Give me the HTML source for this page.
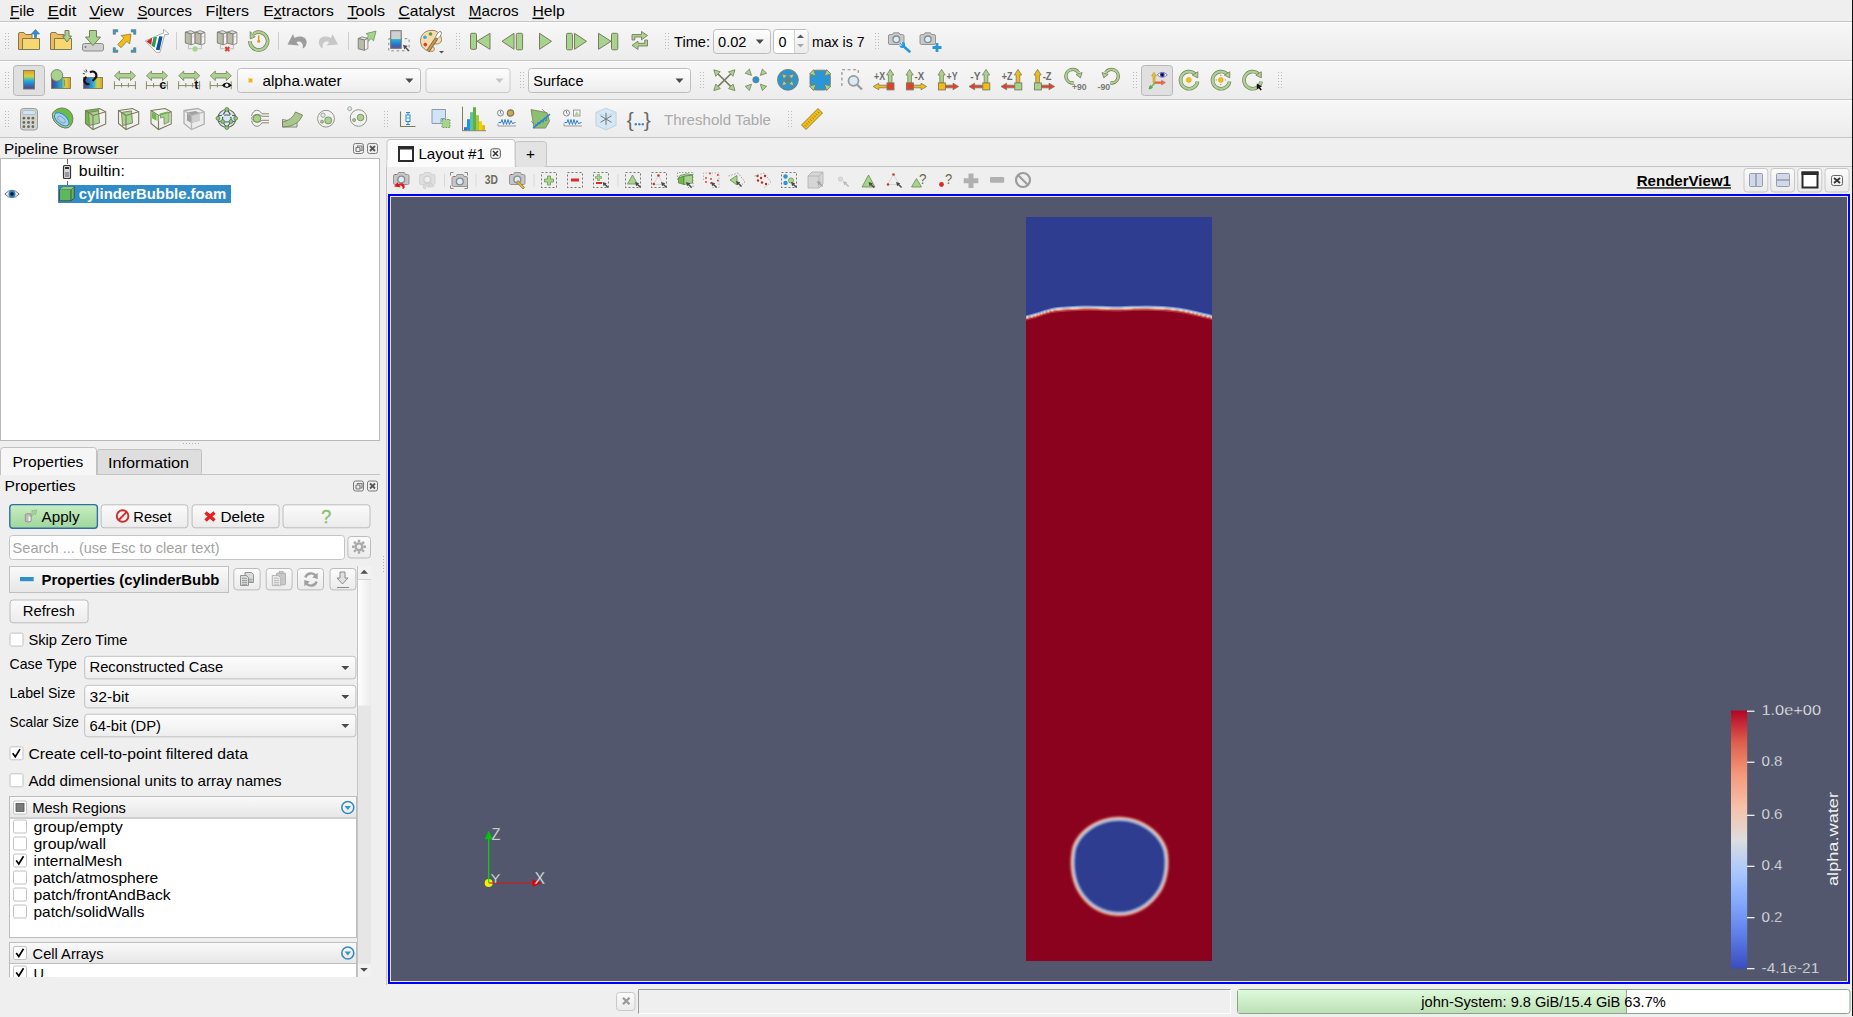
<!DOCTYPE html><html><head><meta charset="utf-8"><style>html,body{margin:0;padding:0;width:1853px;height:1017px;overflow:hidden;background:#efefef}svg{display:block;font-family:"Liberation Sans",sans-serif}</style></head><body><svg width="1853" height="1017" viewBox="0 0 1853 1017"><defs><linearGradient id="gTB" x1="0" y1="0" x2="0" y2="1"><stop offset="0" stop-color="#f7f7f7"/><stop offset="1" stop-color="#ececec"/></linearGradient><linearGradient id="gCombo" x1="0" y1="0" x2="0" y2="1"><stop offset="0" stop-color="#fdfdfd"/><stop offset="1" stop-color="#ededed"/></linearGradient><linearGradient id="gBtn" x1="0" y1="0" x2="0" y2="1"><stop offset="0" stop-color="#fbfbfb"/><stop offset="1" stop-color="#ebebeb"/></linearGradient><linearGradient id="gApply" x1="0" y1="0" x2="0" y2="1"><stop offset="0" stop-color="#c8eec4"/><stop offset="1" stop-color="#9fd69a"/></linearGradient><linearGradient id="gMem" x1="0" y1="0" x2="0" y2="1"><stop offset="0" stop-color="#defadb"/><stop offset="1" stop-color="#bde0b6"/></linearGradient><linearGradient id="gHdr" x1="0" y1="0" x2="0" y2="1"><stop offset="0" stop-color="#fafafa"/><stop offset="1" stop-color="#e6e6e6"/></linearGradient><linearGradient id="gHandle" x1="0" y1="0" x2="1" y2="0"><stop offset="0" stop-color="#ffffff"/><stop offset="1" stop-color="#ebebeb"/></linearGradient><linearGradient id="gCbar" x1="0" y1="1" x2="0" y2="0"><stop offset="0" stop-color="#3b4cc0"/><stop offset="0.125" stop-color="#5d7ce6"/><stop offset="0.25" stop-color="#82a6fb"/><stop offset="0.375" stop-color="#aac7fd"/><stop offset="0.5" stop-color="#dddddd"/><stop offset="0.625" stop-color="#f5c1a9"/><stop offset="0.75" stop-color="#f49a7b"/><stop offset="0.875" stop-color="#de604d"/><stop offset="1" stop-color="#b40426"/></linearGradient><linearGradient id="gCBI" x1="0" y1="0" x2="0" y2="1"><stop offset="0" stop-color="#e09a2e"/><stop offset="0.3" stop-color="#d8d23a"/><stop offset="0.55" stop-color="#22aee0"/><stop offset="0.8" stop-color="#2f6fb5"/><stop offset="1" stop-color="#5b3c8c"/></linearGradient><linearGradient id="gCBH" x1="0" y1="0" x2="1" y2="0"><stop offset="0" stop-color="#5b3c8c"/><stop offset="0.25" stop-color="#2f6fb5"/><stop offset="0.5" stop-color="#22aee0"/><stop offset="0.75" stop-color="#d8d23a"/><stop offset="1" stop-color="#e09a2e"/></linearGradient></defs>
<rect x="0" y="0" width="1853" height="1017" fill="#efefef"/>
<rect x="0" y="0" width="1853" height="21" fill="#efefef"/>
<text x="10.0" y="15.5" font-size="15" fill="#000" textLength="24.5" lengthAdjust="spacingAndGlyphs">File</text>
<rect x="10.0" y="17.6" width="9.287478182170792" height="1.5" fill="#000"/>
<text x="47.7" y="15.5" font-size="15" fill="#000" textLength="28.6" lengthAdjust="spacingAndGlyphs">Edit</text>
<rect x="47.7" y="17.6" width="11.070354249788414" height="1.5" fill="#000"/>
<text x="89.4" y="15.5" font-size="15" fill="#000" textLength="34.5" lengthAdjust="spacingAndGlyphs">View</text>
<rect x="89.4" y="17.6" width="10.705282287375816" height="1.5" fill="#000"/>
<text x="137.4" y="15.5" font-size="15" fill="#000" textLength="54.5" lengthAdjust="spacingAndGlyphs">Sources</text>
<rect x="137.4" y="17.6" width="9.90895022290371" height="1.5" fill="#000"/>
<text x="205.5" y="15.5" font-size="15" fill="#000" textLength="43.5" lengthAdjust="spacingAndGlyphs">Filters</text>
<rect x="218.8115026977385" y="17.6" width="3.550510848352658" height="1.5" fill="#000"/>
<text x="263.3" y="15.5" font-size="15" fill="#000" textLength="70.6" lengthAdjust="spacingAndGlyphs">Extractors</text>
<rect x="273.76198245735844" y="17.6" width="7.8428105255849445" height="1.5" fill="#000"/>
<text x="347.5" y="15.5" font-size="15" fill="#000" textLength="37.7" lengthAdjust="spacingAndGlyphs">Tools</text>
<rect x="347.5" y="17.6" width="9.864477265628484" height="1.5" fill="#000"/>
<text x="398.5" y="15.5" font-size="15" fill="#000" textLength="56.3" lengthAdjust="spacingAndGlyphs">Catalyst</text>
<rect x="398.5" y="17.6" width="11.255778879981547" height="1.5" fill="#000"/>
<text x="468.8" y="15.5" font-size="15" fill="#000" textLength="49.9" lengthAdjust="spacingAndGlyphs">Macros</text>
<rect x="468.8" y="17.6" width="12.6795341891205" height="1.5" fill="#000"/>
<text x="532.4" y="15.5" font-size="15" fill="#000" textLength="32.4" lengthAdjust="spacingAndGlyphs">Help</text>
<rect x="532.4" y="17.6" width="11.37708670988654" height="1.5" fill="#000"/>
<rect x="0" y="22" width="1853" height="38" fill="url(#gTB)"/>
<rect x="0" y="61" width="1853" height="38" fill="url(#gTB)"/>
<rect x="0" y="100" width="1853" height="37" fill="url(#gTB)"/>
<rect x="0" y="21" width="1853" height="1" fill="#c6c6c6"/>
<rect x="0" y="60" width="1853" height="1" fill="#c6c6c6"/>
<rect x="0" y="99" width="1853" height="1" fill="#c6c6c6"/>
<rect x="0" y="137" width="1853" height="1" fill="#c6c6c6"/>
<rect x="0" y="22" width="1853" height="1" fill="#fcfcfc"/>
<rect x="0" y="61" width="1853" height="1" fill="#fcfcfc"/>
<rect x="0" y="100" width="1853" height="1" fill="#fcfcfc"/>
<rect x="5" y="33" width="1" height="1" fill="#bcbcbc"/>
<rect x="8" y="33" width="1" height="1" fill="#bcbcbc"/>
<rect x="5" y="36" width="1" height="1" fill="#bcbcbc"/>
<rect x="8" y="36" width="1" height="1" fill="#bcbcbc"/>
<rect x="5" y="39" width="1" height="1" fill="#bcbcbc"/>
<rect x="8" y="39" width="1" height="1" fill="#bcbcbc"/>
<rect x="5" y="42" width="1" height="1" fill="#bcbcbc"/>
<rect x="8" y="42" width="1" height="1" fill="#bcbcbc"/>
<rect x="5" y="45" width="1" height="1" fill="#bcbcbc"/>
<rect x="8" y="45" width="1" height="1" fill="#bcbcbc"/>
<rect x="5" y="48" width="1" height="1" fill="#bcbcbc"/>
<rect x="8" y="48" width="1" height="1" fill="#bcbcbc"/>
<rect x="456" y="33" width="1" height="1" fill="#bcbcbc"/>
<rect x="459" y="33" width="1" height="1" fill="#bcbcbc"/>
<rect x="456" y="36" width="1" height="1" fill="#bcbcbc"/>
<rect x="459" y="36" width="1" height="1" fill="#bcbcbc"/>
<rect x="456" y="39" width="1" height="1" fill="#bcbcbc"/>
<rect x="459" y="39" width="1" height="1" fill="#bcbcbc"/>
<rect x="456" y="42" width="1" height="1" fill="#bcbcbc"/>
<rect x="459" y="42" width="1" height="1" fill="#bcbcbc"/>
<rect x="456" y="45" width="1" height="1" fill="#bcbcbc"/>
<rect x="459" y="45" width="1" height="1" fill="#bcbcbc"/>
<rect x="456" y="48" width="1" height="1" fill="#bcbcbc"/>
<rect x="459" y="48" width="1" height="1" fill="#bcbcbc"/>
<rect x="665" y="33" width="1" height="1" fill="#bcbcbc"/>
<rect x="668" y="33" width="1" height="1" fill="#bcbcbc"/>
<rect x="665" y="36" width="1" height="1" fill="#bcbcbc"/>
<rect x="668" y="36" width="1" height="1" fill="#bcbcbc"/>
<rect x="665" y="39" width="1" height="1" fill="#bcbcbc"/>
<rect x="668" y="39" width="1" height="1" fill="#bcbcbc"/>
<rect x="665" y="42" width="1" height="1" fill="#bcbcbc"/>
<rect x="668" y="42" width="1" height="1" fill="#bcbcbc"/>
<rect x="665" y="45" width="1" height="1" fill="#bcbcbc"/>
<rect x="668" y="45" width="1" height="1" fill="#bcbcbc"/>
<rect x="665" y="48" width="1" height="1" fill="#bcbcbc"/>
<rect x="668" y="48" width="1" height="1" fill="#bcbcbc"/>
<rect x="875" y="33" width="1" height="1" fill="#bcbcbc"/>
<rect x="878" y="33" width="1" height="1" fill="#bcbcbc"/>
<rect x="875" y="36" width="1" height="1" fill="#bcbcbc"/>
<rect x="878" y="36" width="1" height="1" fill="#bcbcbc"/>
<rect x="875" y="39" width="1" height="1" fill="#bcbcbc"/>
<rect x="878" y="39" width="1" height="1" fill="#bcbcbc"/>
<rect x="875" y="42" width="1" height="1" fill="#bcbcbc"/>
<rect x="878" y="42" width="1" height="1" fill="#bcbcbc"/>
<rect x="875" y="45" width="1" height="1" fill="#bcbcbc"/>
<rect x="878" y="45" width="1" height="1" fill="#bcbcbc"/>
<rect x="875" y="48" width="1" height="1" fill="#bcbcbc"/>
<rect x="878" y="48" width="1" height="1" fill="#bcbcbc"/>
<line x1="176.5" y1="32" x2="176.5" y2="50" stroke="#cfcfcf" stroke-width="1"/>
<line x1="278.5" y1="32" x2="278.5" y2="50" stroke="#cfcfcf" stroke-width="1"/>
<line x1="348.5" y1="32" x2="348.5" y2="50" stroke="#cfcfcf" stroke-width="1"/>
<text x="674" y="46.7" font-size="15" fill="#000" textLength="36.0" lengthAdjust="spacingAndGlyphs">Time:</text>
<rect x="713.5" y="29.5" width="57" height="24" fill="url(#gCombo)" stroke="#bdbdbd" stroke-width="1" rx="3"/>
<text x="718" y="46.7" font-size="15" fill="#000" textLength="28.5" lengthAdjust="spacingAndGlyphs">0.02</text>
<path d="M755.8,39.5 L763.8,39.5 L759.8,44.0 Z" fill="#4a4a4a"/>
<rect x="773.5" y="29.5" width="34.5" height="24" fill="#ffffff" stroke="#bdbdbd" stroke-width="1" rx="3"/>
<line x1="794.5" y1="30" x2="794.5" y2="53" stroke="#d0d0d0" stroke-width="1"/>
<rect x="795" y="30" width="12.5" height="23" fill="url(#gBtn)"/>
<text x="778.5" y="46.7" font-size="15" fill="#000" textLength="8.0" lengthAdjust="spacingAndGlyphs">0</text>
<path d="M797,38 L804,38 L800.5,34.5 Z" fill="#5a5a5a"/>
<path d="M797,44 L804,44 L800.5,47.5 Z" fill="#a8a8a8"/>
<text x="812" y="46.7" font-size="15" fill="#000" textLength="52.5" lengthAdjust="spacingAndGlyphs">max is 7</text>
<rect x="5" y="72" width="1" height="1" fill="#bcbcbc"/>
<rect x="8" y="72" width="1" height="1" fill="#bcbcbc"/>
<rect x="5" y="75" width="1" height="1" fill="#bcbcbc"/>
<rect x="8" y="75" width="1" height="1" fill="#bcbcbc"/>
<rect x="5" y="78" width="1" height="1" fill="#bcbcbc"/>
<rect x="8" y="78" width="1" height="1" fill="#bcbcbc"/>
<rect x="5" y="81" width="1" height="1" fill="#bcbcbc"/>
<rect x="8" y="81" width="1" height="1" fill="#bcbcbc"/>
<rect x="5" y="84" width="1" height="1" fill="#bcbcbc"/>
<rect x="8" y="84" width="1" height="1" fill="#bcbcbc"/>
<rect x="5" y="87" width="1" height="1" fill="#bcbcbc"/>
<rect x="8" y="87" width="1" height="1" fill="#bcbcbc"/>
<rect x="520" y="72" width="1" height="1" fill="#bcbcbc"/>
<rect x="523" y="72" width="1" height="1" fill="#bcbcbc"/>
<rect x="520" y="75" width="1" height="1" fill="#bcbcbc"/>
<rect x="523" y="75" width="1" height="1" fill="#bcbcbc"/>
<rect x="520" y="78" width="1" height="1" fill="#bcbcbc"/>
<rect x="523" y="78" width="1" height="1" fill="#bcbcbc"/>
<rect x="520" y="81" width="1" height="1" fill="#bcbcbc"/>
<rect x="523" y="81" width="1" height="1" fill="#bcbcbc"/>
<rect x="520" y="84" width="1" height="1" fill="#bcbcbc"/>
<rect x="523" y="84" width="1" height="1" fill="#bcbcbc"/>
<rect x="520" y="87" width="1" height="1" fill="#bcbcbc"/>
<rect x="523" y="87" width="1" height="1" fill="#bcbcbc"/>
<rect x="700" y="72" width="1" height="1" fill="#bcbcbc"/>
<rect x="703" y="72" width="1" height="1" fill="#bcbcbc"/>
<rect x="700" y="75" width="1" height="1" fill="#bcbcbc"/>
<rect x="703" y="75" width="1" height="1" fill="#bcbcbc"/>
<rect x="700" y="78" width="1" height="1" fill="#bcbcbc"/>
<rect x="703" y="78" width="1" height="1" fill="#bcbcbc"/>
<rect x="700" y="81" width="1" height="1" fill="#bcbcbc"/>
<rect x="703" y="81" width="1" height="1" fill="#bcbcbc"/>
<rect x="700" y="84" width="1" height="1" fill="#bcbcbc"/>
<rect x="703" y="84" width="1" height="1" fill="#bcbcbc"/>
<rect x="700" y="87" width="1" height="1" fill="#bcbcbc"/>
<rect x="703" y="87" width="1" height="1" fill="#bcbcbc"/>
<rect x="1133" y="72" width="1" height="1" fill="#bcbcbc"/>
<rect x="1136" y="72" width="1" height="1" fill="#bcbcbc"/>
<rect x="1133" y="75" width="1" height="1" fill="#bcbcbc"/>
<rect x="1136" y="75" width="1" height="1" fill="#bcbcbc"/>
<rect x="1133" y="78" width="1" height="1" fill="#bcbcbc"/>
<rect x="1136" y="78" width="1" height="1" fill="#bcbcbc"/>
<rect x="1133" y="81" width="1" height="1" fill="#bcbcbc"/>
<rect x="1136" y="81" width="1" height="1" fill="#bcbcbc"/>
<rect x="1133" y="84" width="1" height="1" fill="#bcbcbc"/>
<rect x="1136" y="84" width="1" height="1" fill="#bcbcbc"/>
<rect x="1133" y="87" width="1" height="1" fill="#bcbcbc"/>
<rect x="1136" y="87" width="1" height="1" fill="#bcbcbc"/>
<rect x="1278" y="72" width="1" height="1" fill="#bcbcbc"/>
<rect x="1281" y="72" width="1" height="1" fill="#bcbcbc"/>
<rect x="1278" y="75" width="1" height="1" fill="#bcbcbc"/>
<rect x="1281" y="75" width="1" height="1" fill="#bcbcbc"/>
<rect x="1278" y="78" width="1" height="1" fill="#bcbcbc"/>
<rect x="1281" y="78" width="1" height="1" fill="#bcbcbc"/>
<rect x="1278" y="81" width="1" height="1" fill="#bcbcbc"/>
<rect x="1281" y="81" width="1" height="1" fill="#bcbcbc"/>
<rect x="1278" y="84" width="1" height="1" fill="#bcbcbc"/>
<rect x="1281" y="84" width="1" height="1" fill="#bcbcbc"/>
<rect x="1278" y="87" width="1" height="1" fill="#bcbcbc"/>
<rect x="1281" y="87" width="1" height="1" fill="#bcbcbc"/>
<rect x="13.5" y="65.5" width="31" height="30" fill="#e0e0e0" stroke="#b8b8b8" stroke-width="1" rx="3"/>
<rect x="1141.5" y="65.5" width="31" height="30" fill="#e0e0e0" stroke="#b8b8b8" stroke-width="1" rx="3"/>
<rect x="237.5" y="68.5" width="183" height="24" fill="url(#gCombo)" stroke="#bdbdbd" stroke-width="1" rx="3"/>
<text x="262.4" y="85.6" font-size="15" fill="#000" textLength="79.3" lengthAdjust="spacingAndGlyphs">alpha.water</text>
<path d="M405.4,78.5 L413.4,78.5 L409.4,83.0 Z" fill="#4a4a4a"/>
<rect x="248.5" y="78.5" width="4" height="4" fill="#f2b21e" stroke="#f8d98a" stroke-width="0.8"/>
<rect x="426.0" y="68.5" width="84.0" height="24" fill="url(#gCombo)" stroke="#cacaca" stroke-width="1" rx="3"/>
<path d="M495.5,78.5 L503.5,78.5 L499.5,83.0 Z" fill="#c6c6c6"/>
<rect x="528.5" y="68.5" width="162" height="24" fill="url(#gCombo)" stroke="#bdbdbd" stroke-width="1" rx="3"/>
<text x="533.3" y="85.6" font-size="15" fill="#000" textLength="50.2" lengthAdjust="spacingAndGlyphs">Surface</text>
<path d="M675.5,78.5 L683.5,78.5 L679.5,83.0 Z" fill="#4a4a4a"/>
<rect x="5" y="111" width="1" height="1" fill="#bcbcbc"/>
<rect x="8" y="111" width="1" height="1" fill="#bcbcbc"/>
<rect x="5" y="114" width="1" height="1" fill="#bcbcbc"/>
<rect x="8" y="114" width="1" height="1" fill="#bcbcbc"/>
<rect x="5" y="117" width="1" height="1" fill="#bcbcbc"/>
<rect x="8" y="117" width="1" height="1" fill="#bcbcbc"/>
<rect x="5" y="120" width="1" height="1" fill="#bcbcbc"/>
<rect x="8" y="120" width="1" height="1" fill="#bcbcbc"/>
<rect x="5" y="123" width="1" height="1" fill="#bcbcbc"/>
<rect x="8" y="123" width="1" height="1" fill="#bcbcbc"/>
<rect x="5" y="126" width="1" height="1" fill="#bcbcbc"/>
<rect x="8" y="126" width="1" height="1" fill="#bcbcbc"/>
<rect x="384" y="111" width="1" height="1" fill="#bcbcbc"/>
<rect x="387" y="111" width="1" height="1" fill="#bcbcbc"/>
<rect x="384" y="114" width="1" height="1" fill="#bcbcbc"/>
<rect x="387" y="114" width="1" height="1" fill="#bcbcbc"/>
<rect x="384" y="117" width="1" height="1" fill="#bcbcbc"/>
<rect x="387" y="117" width="1" height="1" fill="#bcbcbc"/>
<rect x="384" y="120" width="1" height="1" fill="#bcbcbc"/>
<rect x="387" y="120" width="1" height="1" fill="#bcbcbc"/>
<rect x="384" y="123" width="1" height="1" fill="#bcbcbc"/>
<rect x="387" y="123" width="1" height="1" fill="#bcbcbc"/>
<rect x="384" y="126" width="1" height="1" fill="#bcbcbc"/>
<rect x="387" y="126" width="1" height="1" fill="#bcbcbc"/>
<rect x="788" y="111" width="1" height="1" fill="#bcbcbc"/>
<rect x="791" y="111" width="1" height="1" fill="#bcbcbc"/>
<rect x="788" y="114" width="1" height="1" fill="#bcbcbc"/>
<rect x="791" y="114" width="1" height="1" fill="#bcbcbc"/>
<rect x="788" y="117" width="1" height="1" fill="#bcbcbc"/>
<rect x="791" y="117" width="1" height="1" fill="#bcbcbc"/>
<rect x="788" y="120" width="1" height="1" fill="#bcbcbc"/>
<rect x="791" y="120" width="1" height="1" fill="#bcbcbc"/>
<rect x="788" y="123" width="1" height="1" fill="#bcbcbc"/>
<rect x="791" y="123" width="1" height="1" fill="#bcbcbc"/>
<rect x="788" y="126" width="1" height="1" fill="#bcbcbc"/>
<rect x="791" y="126" width="1" height="1" fill="#bcbcbc"/>
<text x="664" y="124.8" font-size="15" fill="#aaaaaa" textLength="107.0" lengthAdjust="spacingAndGlyphs">Threshold Table</text>
<text x="4" y="154.4" font-size="15" fill="#000" textLength="114.5" lengthAdjust="spacingAndGlyphs">Pipeline Browser</text>
<rect x="353.5" y="143.5" width="10" height="10" fill="none" stroke="#7a7a7a" stroke-width="1" rx="2"/>
<rect x="356" y="147.5" width="4" height="4" fill="none" stroke="#7a7a7a" stroke-width="1.2" rx="0.8"/>
<path d="M357.5,147 V146 H362 V150.5 H360.5" fill="none" stroke="#7a7a7a" stroke-width="1.2"/>
<rect x="367.5" y="143.5" width="10" height="10" fill="none" stroke="#7a7a7a" stroke-width="1" rx="2"/>
<path d="M370,146 L375,151 M375,146 L370,151" fill="none" stroke="#555" stroke-width="1.8"/>
<rect x="0.5" y="158.5" width="379" height="282" fill="#ffffff" stroke="#b8b8b8" stroke-width="1"/>
<line x1="67.5" y1="159" x2="67.5" y2="164" stroke="#6a6a6a" stroke-width="1"/>
<line x1="67.5" y1="181" x2="67.5" y2="186" stroke="#6a6a6a" stroke-width="1"/>
<rect x="63.5" y="165.5" width="7" height="13" fill="#d9d9d9" stroke="#333" stroke-width="1.2" rx="1"/>
<rect x="65" y="167" width="4" height="2" fill="#333"/>
<rect x="65" y="172" width="4" height="5" fill="#9a9a9a"/>
<text x="78.8" y="176.4" font-size="15" fill="#000" textLength="46.0" lengthAdjust="spacingAndGlyphs">builtin:</text>
<rect x="58" y="185" width="173" height="18" fill="#308cc6"/>
<path d="M59.5,189.5 L63,186.8 L74.3,186.8 L74.3,198 L71,200.8 L59.5,200.8 Z" fill="#5cb85c" stroke="#4d4d4d" stroke-width="1"/>
<path d="M59.5,189.5 L71,189.5 L74.3,186.8 M71,189.5 L71,200.8" fill="none" stroke="#4d4d4d" stroke-width="1"/>
<path d="M59.5,189.5 L63,186.8 L74.3,186.8 L71,189.5 Z" fill="#7fcf7f"/>
<text x="78.8" y="198.7" font-size="15" font-weight="bold" fill="#ffffff" textLength="147.4" lengthAdjust="spacingAndGlyphs">cylinderBubble.foam</text>
<path d="M4.8,194 Q12,186.5 19.2,194 Q12,201.5 4.8,194 Z" fill="#ffffff" stroke="#5a5a5a" stroke-width="0.9"/>
<circle cx="12" cy="194" r="3.6" fill="#1e88d4"/>
<circle cx="12" cy="194" r="1.8" fill="#000"/>
<rect x="183" y="443" width="1" height="1" fill="#b0b0b0"/>
<rect x="383" y="556" width="1" height="1" fill="#b0b0b0"/>
<rect x="186" y="443" width="1" height="1" fill="#b0b0b0"/>
<rect x="383" y="559" width="1" height="1" fill="#b0b0b0"/>
<rect x="189" y="443" width="1" height="1" fill="#b0b0b0"/>
<rect x="383" y="562" width="1" height="1" fill="#b0b0b0"/>
<rect x="192" y="443" width="1" height="1" fill="#b0b0b0"/>
<rect x="383" y="565" width="1" height="1" fill="#b0b0b0"/>
<rect x="195" y="443" width="1" height="1" fill="#b0b0b0"/>
<rect x="383" y="568" width="1" height="1" fill="#b0b0b0"/>
<rect x="198" y="443" width="1" height="1" fill="#b0b0b0"/>
<rect x="383" y="571" width="1" height="1" fill="#b0b0b0"/>
<rect x="97.5" y="449.5" width="104" height="25" fill="#dedede" stroke="#c2c2c2" stroke-width="1" rx="2"/>
<text x="108" y="467.8" font-size="15" fill="#000" textLength="81.0" lengthAdjust="spacingAndGlyphs">Information</text>
<path d="M0.5,475 V450.5 Q0.5,447.5 3.5,447.5 H93.5 Q96.5,447.5 96.5,450.5 V475 Z" fill="#f6f6f6" stroke="none" stroke-width="1"/>
<path d="M0.5,475 V450.5 Q0.5,447.5 3.5,447.5 H93.5 Q96.5,447.5 96.5,450.5 V475" fill="none" stroke="#c0c0c0" stroke-width="1"/>
<line x1="97" y1="474.5" x2="380" y2="474.5" stroke="#c4c4c4" stroke-width="1"/>
<text x="12.5" y="466.8" font-size="15" fill="#000" textLength="70.9" lengthAdjust="spacingAndGlyphs">Properties</text>
<text x="4.6" y="490.8" font-size="15" fill="#000" textLength="70.9" lengthAdjust="spacingAndGlyphs">Properties</text>
<rect x="353.5" y="481.0" width="10" height="10" fill="none" stroke="#7a7a7a" stroke-width="1" rx="2"/>
<rect x="356" y="485.0" width="4" height="4" fill="none" stroke="#7a7a7a" stroke-width="1.2" rx="0.8"/>
<path d="M357.5,484.5 V483.5 H362 V488.0 H360.5" fill="none" stroke="#7a7a7a" stroke-width="1.2"/>
<rect x="367.5" y="481.0" width="10" height="10" fill="none" stroke="#7a7a7a" stroke-width="1" rx="2"/>
<path d="M370,483.5 L375,488.5 M375,483.5 L370,488.5" fill="none" stroke="#555" stroke-width="1.8"/>
<rect x="9.8" y="504.6" width="87.6" height="23.6" fill="url(#gApply)" stroke="#2f6fa6" stroke-width="1.4" rx="3"/>
<text x="41.5" y="522" font-size="15" fill="#000" textLength="38.1" lengthAdjust="spacingAndGlyphs">Apply</text>
<path d="M36.8,509.9 L31.5,510.8 L32.6,511.9 L29.8,514.7 L31.6,516.5 L34.4,513.7 L35.6,514.9 Z" fill="#a6d48e" stroke="#8ab080" stroke-width="0.6"/>
<path d="M25.3,514.3 Q28.2,512.8 31.1,514.3 V521.2 Q28.2,523 25.3,521.2 Z" fill="#bdbdb4" stroke="#8a8a8a" stroke-width="0.8"/>
<rect x="28.5" y="516.5" width="2" height="4.5" fill="#f4f0f4"/>
<rect x="101.1" y="504.8" width="86.80000000000001" height="22.999999999999943" fill="url(#gBtn)" stroke="#bcbcbc" stroke-width="1" rx="3"/>
<circle cx="122.6" cy="516.1" r="5.8" fill="none" stroke="#d42a2a" stroke-width="1.9"/>
<line x1="118.8" y1="520" x2="126.4" y2="512.2" stroke="#d42a2a" stroke-width="1.9"/>
<text x="133.3" y="522" font-size="15" fill="#000" textLength="38.3" lengthAdjust="spacingAndGlyphs">Reset</text>
<rect x="192.1" y="504.8" width="87.00000000000003" height="22.999999999999943" fill="url(#gBtn)" stroke="#bcbcbc" stroke-width="1" rx="3"/>
<path d="M205.5,512.5 L214.5,520.5 M214.5,512.5 L205.5,520.5" fill="none" stroke="#e82020" stroke-width="3.4"/>
<text x="220.4" y="522" font-size="15" fill="#000" textLength="44.4" lengthAdjust="spacingAndGlyphs">Delete</text>
<rect x="283.0" y="504.8" width="87.0" height="22.999999999999943" fill="url(#gBtn)" stroke="#bcbcbc" stroke-width="1" rx="3"/>
<text x="321.2" y="523" font-size="18.5" fill="#8cbf70" textLength="10.0" lengthAdjust="spacingAndGlyphs" stroke="#8cbf70" stroke-width="0.4">?</text>
<rect x="9.5" y="535.5" width="335" height="24" fill="#ffffff" stroke="#c4c4c4" stroke-width="1" rx="3"/>
<text x="12.6" y="552.7" font-size="15" fill="#a3a3a3" textLength="207.0" lengthAdjust="spacingAndGlyphs">Search ... (use Esc to clear text)</text>
<rect x="347.9" y="536.5" width="22.600000000000023" height="21.5" fill="url(#gBtn)" stroke="#bcbcbc" stroke-width="1" rx="3"/>
<path d="M363.50,546.80 L366.00,546.80 M362.18,549.98 L363.95,551.75 M359.00,551.30 L359.00,553.80 M355.82,549.98 L354.05,551.75 M354.50,546.80 L352.00,546.80 M355.82,543.62 L354.05,541.85 M359.00,542.30 L359.00,539.80 M362.18,543.62 L363.95,541.85 " fill="none" stroke="#a8a8a8" stroke-width="2.4"/>
<circle cx="359" cy="546.8" r="4.6" fill="#a8a8a8"/>
<circle cx="359" cy="546.8" r="2.2" fill="#efefef"/>
<line x1="357.5" y1="566" x2="357.5" y2="977" stroke="#c4c4c4" stroke-width="1"/>
<rect x="358" y="566" width="13" height="411" fill="#e6e6e6"/>
<rect x="358" y="566" width="13" height="13.5" fill="#f2f2f2"/>
<line x1="358" y1="579.5" x2="371" y2="579.5" stroke="#d4d4d4" stroke-width="1"/>
<path d="M360.4,573.8 L368,573.8 L364.2,569.7 Z" fill="#4e4e4e"/>
<rect x="358" y="580" width="13" height="125.5" fill="url(#gHandle)"/>
<rect x="358" y="964" width="13" height="13" fill="#f2f2f2"/>
<path d="M360.2,968 L367.8,968 L364,971.8 Z" fill="#4e4e4e"/>
<rect x="9.5" y="566.5" width="219" height="26" fill="url(#gHdr)" stroke="#c0c0c0" stroke-width="1"/>
<rect x="20" y="577" width="13.7" height="4.2" fill="#2e8fce"/>
<text x="41.5" y="584.7" font-size="15" font-weight="bold" fill="#000" textLength="177.9" lengthAdjust="spacingAndGlyphs">Properties (cylinderBubb</text>
<rect x="233.8" y="568.5" width="26.30000000000001" height="21.399999999999977" fill="url(#gBtn)" stroke="#bcbcbc" stroke-width="1" rx="3"/>
<rect x="266.2" y="568.5" width="25.900000000000034" height="21.399999999999977" fill="url(#gBtn)" stroke="#bcbcbc" stroke-width="1" rx="3"/>
<rect x="297.5" y="568.5" width="26" height="21.399999999999977" fill="url(#gBtn)" stroke="#bcbcbc" stroke-width="1" rx="3"/>
<rect x="330.0" y="568.5" width="25.899999999999977" height="21.399999999999977" fill="url(#gBtn)" stroke="#bcbcbc" stroke-width="1" rx="3"/>
<path d="M245,572.5 H251.5 L253.5,574.5 V582.5 H245 Z" fill="#d8dcdc" stroke="#8a8a8a" stroke-width="0.9"/>
<path d="M240.5,575.5 H246.5 L248.5,577.5 V585.5 H240.5 Z" fill="#d8dcdc" stroke="#8a8a8a" stroke-width="0.9"/>
<line x1="242" y1="578.3" x2="247" y2="578.3" stroke="#8a8a8a" stroke-width="0.8"/>
<line x1="242" y1="580.5" x2="247" y2="580.5" stroke="#8a8a8a" stroke-width="0.8"/>
<line x1="242" y1="582.4" x2="247" y2="582.4" stroke="#8a8a8a" stroke-width="0.8"/>
<line x1="242" y1="584.3" x2="247" y2="584.3" stroke="#8a8a8a" stroke-width="0.8"/>
<line x1="249" y1="579.3" x2="252.5" y2="579.3" stroke="#8a8a8a" stroke-width="0.8"/>
<line x1="249" y1="581.2" x2="252.5" y2="581.2" stroke="#8a8a8a" stroke-width="0.8"/>
<rect x="276.5" y="573" width="9" height="11.8" fill="#c8c8c8" stroke="#ababab" stroke-width="0.9" rx="1"/>
<rect x="279.3" y="571.5" width="3.8" height="2" fill="#c8c8c8" stroke="#ababab" stroke-width="0.7"/>
<path d="M272.3,575.5 H278.5 L280.7,577.7 V585.7 H272.3 Z" fill="#e6e6e6" stroke="#b0b0b0" stroke-width="0.9"/>
<line x1="274" y1="578.3" x2="279" y2="578.3" stroke="#b8b8b8" stroke-width="0.8"/>
<line x1="274" y1="580.5" x2="279" y2="580.5" stroke="#b8b8b8" stroke-width="0.8"/>
<line x1="274" y1="582.4" x2="279" y2="582.4" stroke="#b8b8b8" stroke-width="0.8"/>
<line x1="274" y1="584.3" x2="279" y2="584.3" stroke="#b8b8b8" stroke-width="0.8"/>
<path d="M305.3,577.5 A6,6 0 0 1 315.8,575.8 M316.7,581.5 A6,6 0 0 1 306.2,583.2" fill="none" stroke="#a0a0a0" stroke-width="2.4"/>
<path d="M317.6,572.8 L317.8,579 L312.2,577.4 Z M304.4,586.2 L304.2,580 L309.8,581.6 Z" fill="#a0a0a0"/>
<path d="M340,572 h5 v6 h3 l-5.5,6 l-5.5,-6 h3 Z" fill="#e0e0e0" stroke="#8a8a8a" stroke-width="1"/>
<line x1="337" y1="587.5" x2="349" y2="587.5" stroke="#8a8a8a" stroke-width="1"/>
<rect x="10.0" y="600.0" width="78.1" height="22.799999999999955" fill="url(#gBtn)" stroke="#bcbcbc" stroke-width="1" rx="3"/>
<text x="22.7" y="616.3" font-size="15" fill="#000" textLength="52.0" lengthAdjust="spacingAndGlyphs">Refresh</text>
<rect x="10.0" y="633.1" width="13" height="13" fill="#ffffff" stroke="#c2c2c2" stroke-width="1" rx="1.5"/>
<text x="28.4" y="644.8" font-size="15" fill="#000" textLength="99.0" lengthAdjust="spacingAndGlyphs">Skip Zero Time</text>
<text x="9.5" y="668.8" font-size="15" fill="#000" textLength="67.3" lengthAdjust="spacingAndGlyphs">Case Type</text>
<rect x="84.7" y="656.3" width="271.2" height="22.600000000000023" fill="url(#gCombo)" stroke="#c0c0c0" stroke-width="1" rx="3"/>
<text x="89.5" y="672.2" font-size="15" fill="#000" textLength="133.7" lengthAdjust="spacingAndGlyphs">Reconstructed Case</text>
<path d="M341.3,666.0999999999999 L349.3,666.0999999999999 L345.3,670.0999999999999 Z" fill="#4a4a4a"/>
<text x="9.5" y="697.9" font-size="15" fill="#000" textLength="65.9" lengthAdjust="spacingAndGlyphs">Label Size</text>
<rect x="84.7" y="685.3" width="271.2" height="22.600000000000023" fill="url(#gCombo)" stroke="#c0c0c0" stroke-width="1" rx="3"/>
<text x="89.5" y="701.7" font-size="15" fill="#000" textLength="39.3" lengthAdjust="spacingAndGlyphs">32-bit</text>
<path d="M341.3,695.0999999999999 L349.3,695.0999999999999 L345.3,699.0999999999999 Z" fill="#4a4a4a"/>
<text x="9.5" y="727" font-size="15" fill="#000" textLength="69.4" lengthAdjust="spacingAndGlyphs">Scalar Size</text>
<rect x="84.7" y="714.2" width="271.2" height="22.59999999999991" fill="url(#gCombo)" stroke="#c0c0c0" stroke-width="1" rx="3"/>
<text x="89.5" y="730.5" font-size="15" fill="#000" textLength="71.5" lengthAdjust="spacingAndGlyphs">64-bit (DP)</text>
<path d="M341.3,724.0 L349.3,724.0 L345.3,728.0 Z" fill="#4a4a4a"/>
<rect x="10.0" y="746.8" width="13" height="13" fill="#ffffff" stroke="#c2c2c2" stroke-width="1" rx="1.5"/>
<path d="M12.7,753.3 L15.3,756.8 L20.0,749.0999999999999" fill="none" stroke="#000" stroke-width="1.7"/>
<text x="28.4" y="759" font-size="15" fill="#000" textLength="219.6" lengthAdjust="spacingAndGlyphs">Create cell-to-point filtered data</text>
<rect x="10.0" y="773.8" width="13" height="13" fill="#ffffff" stroke="#c2c2c2" stroke-width="1" rx="1.5"/>
<text x="28.4" y="785.9" font-size="15" fill="#000" textLength="253.3" lengthAdjust="spacingAndGlyphs">Add dimensional units to array names</text>
<rect x="9.5" y="818" width="347" height="119.5" fill="#ffffff" stroke="#bdbdbd" stroke-width="1"/>
<rect x="9.5" y="796.5" width="347" height="21.5" fill="url(#gHdr)" stroke="#bdbdbd" stroke-width="1"/>
<rect x="13.5" y="801.0" width="13" height="13" fill="#ffffff" stroke="#c2c2c2" stroke-width="1" rx="1.5"/>
<rect x="16" y="803.5" width="8" height="8" fill="#7a7a7a" stroke="#505050" stroke-width="0.8"/>
<text x="32.2" y="812.6" font-size="15" fill="#000" textLength="93.7" lengthAdjust="spacingAndGlyphs">Mesh Regions</text>
<circle cx="347.8" cy="807.5" r="6" fill="none" stroke="#3a8cb8" stroke-width="1.6"/>
<path d="M344.6,806.0 L351.0,806.0 L347.8,810.0 Z" fill="#2e96d6"/>
<rect x="13.5" y="820.0" width="13" height="13" fill="#ffffff" stroke="#c2c2c2" stroke-width="1" rx="1.5"/>
<text x="33.5" y="832" font-size="15" fill="#000" textLength="89.2" lengthAdjust="spacingAndGlyphs">group/empty</text>
<rect x="13.5" y="837.0" width="13" height="13" fill="#ffffff" stroke="#c2c2c2" stroke-width="1" rx="1.5"/>
<text x="33.5" y="849" font-size="15" fill="#000" textLength="72.5" lengthAdjust="spacingAndGlyphs">group/wall</text>
<rect x="13.5" y="854.0" width="13" height="13" fill="#ffffff" stroke="#c2c2c2" stroke-width="1" rx="1.5"/>
<path d="M16.2,860.5 L18.8,864.0 L23.5,856.3" fill="none" stroke="#000" stroke-width="1.7"/>
<text x="33.5" y="866" font-size="15" fill="#000" textLength="88.5" lengthAdjust="spacingAndGlyphs">internalMesh</text>
<rect x="13.5" y="871.0" width="13" height="13" fill="#ffffff" stroke="#c2c2c2" stroke-width="1" rx="1.5"/>
<text x="33.5" y="883" font-size="15" fill="#000" textLength="124.8" lengthAdjust="spacingAndGlyphs">patch/atmosphere</text>
<rect x="13.5" y="888.0" width="13" height="13" fill="#ffffff" stroke="#c2c2c2" stroke-width="1" rx="1.5"/>
<text x="33.5" y="900" font-size="15" fill="#000" textLength="137.2" lengthAdjust="spacingAndGlyphs">patch/frontAndBack</text>
<rect x="13.5" y="905.0" width="13" height="13" fill="#ffffff" stroke="#c2c2c2" stroke-width="1" rx="1.5"/>
<text x="33.5" y="917" font-size="15" fill="#000" textLength="110.9" lengthAdjust="spacingAndGlyphs">patch/solidWalls</text>
<rect x="9.5" y="963.5" width="347" height="20" fill="#ffffff" stroke="#bdbdbd" stroke-width="1"/>
<rect x="9.5" y="942.5" width="347" height="21" fill="url(#gHdr)" stroke="#bdbdbd" stroke-width="1"/>
<rect x="13.5" y="946.5" width="13" height="13" fill="#ffffff" stroke="#c2c2c2" stroke-width="1" rx="1.5"/>
<path d="M16.2,953 L18.8,956.5 L23.5,948.8" fill="none" stroke="#000" stroke-width="1.7"/>
<text x="32.6" y="959" font-size="15" fill="#000" textLength="70.9" lengthAdjust="spacingAndGlyphs">Cell Arrays</text>
<circle cx="347.8" cy="953" r="6" fill="none" stroke="#3a8cb8" stroke-width="1.6"/>
<path d="M344.6,951.5 L351.0,951.5 L347.8,955.5 Z" fill="#2e96d6"/>
<rect x="13.5" y="966.0" width="13" height="13" fill="#ffffff" stroke="#c2c2c2" stroke-width="1" rx="1.5"/>
<path d="M16.2,972.5 L18.8,976.0 L23.5,968.3" fill="none" stroke="#000" stroke-width="1.7"/>
<text x="33.5" y="979" font-size="15" fill="#000" textLength="10.5" lengthAdjust="spacingAndGlyphs">U</text>
<rect x="0" y="977" width="386" height="11" fill="#efefef"/>
<path d="M386.5,985 V166.5 H1852" fill="none" stroke="#c4c4c4" stroke-width="1"/>
<rect x="515" y="141.5" width="31.5" height="26" fill="#e3e3e3" stroke="#c4c4c4" stroke-width="1" rx="3"/>
<text x="526" y="159.3" font-size="15" fill="#000" textLength="9.0" lengthAdjust="spacingAndGlyphs">+</text>
<rect x="387" y="139.5" width="128" height="30" fill="#fbfbfb" stroke="#c4c4c4" stroke-width="1" rx="3"/>
<rect x="387.5" y="160" width="127" height="8" fill="#fbfbfb"/>
<rect x="387" y="167" width="1465" height="27" fill="#efefef"/>
<rect x="399" y="147" width="14" height="14" fill="#ffffff" stroke="#2b2b2b" stroke-width="2"/>
<rect x="398" y="146" width="16" height="3.5" fill="#2b2b2b"/>
<text x="418.4" y="159.3" font-size="15" fill="#000" textLength="66.6" lengthAdjust="spacingAndGlyphs">Layout #1</text>
<rect x="490.8" y="148.8" width="9.5" height="9.5" fill="none" stroke="#555" stroke-width="1" rx="2"/>
<path d="M493,151 L498,156 M498,151 L493,156" fill="none" stroke="#333" stroke-width="1.5"/>
<text x="1636.7" y="185.8" font-size="15" font-weight="bold" fill="#000" textLength="94.3" lengthAdjust="spacingAndGlyphs">RenderView1</text>
<rect x="1636.7" y="187.3" width="94.3" height="1.3" fill="#000"/>
<rect x="1744.0" y="168.5" width="23.799999999999955" height="23.5" fill="url(#gBtn)" stroke="#c8c8c8" stroke-width="1" rx="3"/>
<rect x="1770.8" y="168.5" width="23.700000000000045" height="23.5" fill="url(#gBtn)" stroke="#c8c8c8" stroke-width="1" rx="3"/>
<rect x="1797.8" y="168.5" width="24.0" height="23.5" fill="url(#gBtn)" stroke="#c8c8c8" stroke-width="1" rx="3"/>
<rect x="1825.0" y="168.5" width="24.09999999999991" height="23.5" fill="url(#gBtn)" stroke="#c8c8c8" stroke-width="1" rx="3"/>
<rect x="1749.5" y="173.5" width="13" height="13" fill="#d0d8ec" stroke="#9a9aa8" stroke-width="1" rx="1"/>
<line x1="1756" y1="174" x2="1756" y2="186" stroke="#9a9aa8" stroke-width="1.5"/>
<rect x="1776.5" y="173.5" width="13" height="13" fill="#d0d8ec" stroke="#9a9aa8" stroke-width="1" rx="1"/>
<line x1="1777" y1="180" x2="1789" y2="180" stroke="#9a9aa8" stroke-width="1.5"/>
<rect x="1802.5" y="172.5" width="15" height="15" fill="#ffffff" stroke="#2b2b2b" stroke-width="2"/>
<rect x="1801.5" y="171.5" width="17" height="3.5" fill="#2b2b2b"/>
<rect x="1831.5" y="175.5" width="11" height="10" fill="none" stroke="#666" stroke-width="1" rx="2"/>
<path d="M1834,178 L1840,183 M1840,178 L1834,183" fill="none" stroke="#333" stroke-width="1.8"/>
<rect x="388" y="194" width="1462" height="790" fill="#0000ff"/>
<rect x="390" y="196" width="1458" height="786" fill="#e8e8e0"/>
<rect x="391" y="197" width="1456" height="784" fill="#52576e"/>
<defs><filter id="fb" x="-10%" y="-10%" width="120%" height="120%"><feGaussianBlur stdDeviation="0.7"/></filter><clipPath id="colc"><rect x="1026" y="217" width="186" height="744"/></clipPath></defs>
<rect x="1026" y="217" width="186" height="744" fill="#8b021e"/>
<g clip-path="url(#colc)"><g filter="url(#fb)">
<path d="M1020,319.5 C1021.00,319.15 1023.33,318.20 1026,317.4 C1028.67,316.60 1031.67,315.97 1036,314.7 C1040.33,313.43 1046.67,310.88 1052,309.8 C1057.33,308.72 1062.50,308.60 1068,308.2 C1073.50,307.80 1079.50,307.48 1085,307.4 C1090.50,307.32 1095.67,307.57 1101,307.7 C1106.33,307.83 1112.00,308.20 1117,308.2 C1122.00,308.20 1126.00,307.83 1131,307.7 C1136.00,307.57 1141.67,307.37 1147,307.4 C1152.33,307.43 1157.50,307.52 1163,307.9 C1168.50,308.28 1174.50,308.85 1180,309.7 C1185.50,310.55 1190.67,311.80 1196,313.0 C1201.33,314.20 1208.33,315.87 1212,316.9 C1215.67,317.93 1217.00,318.82 1218,319.2 V210 H1020 Z" fill="#2f3c90"/>
<path d="M1020,318.2 C1021.00,317.85 1023.33,316.90 1026,316.09999999999997 C1028.67,315.30 1031.67,314.67 1036,313.4 C1040.33,312.13 1046.67,309.58 1052,308.5 C1057.33,307.42 1062.50,307.30 1068,306.9 C1073.50,306.50 1079.50,306.18 1085,306.09999999999997 C1090.50,306.02 1095.67,306.27 1101,306.4 C1106.33,306.53 1112.00,306.90 1117,306.9 C1122.00,306.90 1126.00,306.53 1131,306.4 C1136.00,306.27 1141.67,306.07 1147,306.09999999999997 C1152.33,306.13 1157.50,306.22 1163,306.59999999999997 C1168.50,306.98 1174.50,307.55 1180,308.4 C1185.50,309.25 1190.67,310.50 1196,311.7 C1201.33,312.90 1208.33,314.57 1212,315.59999999999997 C1215.67,316.63 1217.00,317.52 1218,317.9" fill="none" stroke="#6f8fd0" stroke-width="1.2"/>
<path d="M1020,319.2 C1021.00,318.85 1023.33,317.90 1026,317.09999999999997 C1028.67,316.30 1031.67,315.67 1036,314.4 C1040.33,313.13 1046.67,310.58 1052,309.5 C1057.33,308.42 1062.50,308.30 1068,307.9 C1073.50,307.50 1079.50,307.18 1085,307.09999999999997 C1090.50,307.02 1095.67,307.27 1101,307.4 C1106.33,307.53 1112.00,307.90 1117,307.9 C1122.00,307.90 1126.00,307.53 1131,307.4 C1136.00,307.27 1141.67,307.07 1147,307.09999999999997 C1152.33,307.13 1157.50,307.22 1163,307.59999999999997 C1168.50,307.98 1174.50,308.55 1180,309.4 C1185.50,310.25 1190.67,311.50 1196,312.7 C1201.33,313.90 1208.33,315.57 1212,316.59999999999997 C1215.67,317.63 1217.00,318.52 1218,318.9" fill="none" stroke="#bcc8e6" stroke-width="1.2"/>
<path d="M1020,320.2 C1021.00,319.85 1023.33,318.90 1026,318.09999999999997 C1028.67,317.30 1031.67,316.67 1036,315.4 C1040.33,314.13 1046.67,311.58 1052,310.5 C1057.33,309.42 1062.50,309.30 1068,308.9 C1073.50,308.50 1079.50,308.18 1085,308.09999999999997 C1090.50,308.02 1095.67,308.27 1101,308.4 C1106.33,308.53 1112.00,308.90 1117,308.9 C1122.00,308.90 1126.00,308.53 1131,308.4 C1136.00,308.27 1141.67,308.07 1147,308.09999999999997 C1152.33,308.13 1157.50,308.22 1163,308.59999999999997 C1168.50,308.98 1174.50,309.55 1180,310.4 C1185.50,311.25 1190.67,312.50 1196,313.7 C1201.33,314.90 1208.33,316.57 1212,317.59999999999997 C1215.67,318.63 1217.00,319.52 1218,319.9" fill="none" stroke="#e6d4c8" stroke-width="1.1"/>
<path d="M1020,321.2 C1021.00,320.85 1023.33,319.90 1026,319.09999999999997 C1028.67,318.30 1031.67,317.67 1036,316.4 C1040.33,315.13 1046.67,312.58 1052,311.5 C1057.33,310.42 1062.50,310.30 1068,309.9 C1073.50,309.50 1079.50,309.18 1085,309.09999999999997 C1090.50,309.02 1095.67,309.27 1101,309.4 C1106.33,309.53 1112.00,309.90 1117,309.9 C1122.00,309.90 1126.00,309.53 1131,309.4 C1136.00,309.27 1141.67,309.07 1147,309.09999999999997 C1152.33,309.13 1157.50,309.22 1163,309.59999999999997 C1168.50,309.98 1174.50,310.55 1180,311.4 C1185.50,312.25 1190.67,313.50 1196,314.7 C1201.33,315.90 1208.33,317.57 1212,318.59999999999997 C1215.67,319.63 1217.00,320.52 1218,320.9" fill="none" stroke="#e48a68" stroke-width="1.1"/>
<path d="M1020,322.2 C1021.00,321.85 1023.33,320.90 1026,320.09999999999997 C1028.67,319.30 1031.67,318.67 1036,317.4 C1040.33,316.13 1046.67,313.58 1052,312.5 C1057.33,311.42 1062.50,311.30 1068,310.9 C1073.50,310.50 1079.50,310.18 1085,310.09999999999997 C1090.50,310.02 1095.67,310.27 1101,310.4 C1106.33,310.53 1112.00,310.90 1117,310.9 C1122.00,310.90 1126.00,310.53 1131,310.4 C1136.00,310.27 1141.67,310.07 1147,310.09999999999997 C1152.33,310.13 1157.50,310.22 1163,310.59999999999997 C1168.50,310.98 1174.50,311.55 1180,312.4 C1185.50,313.25 1190.67,314.50 1196,315.7 C1201.33,316.90 1208.33,318.57 1212,319.59999999999997 C1215.67,320.63 1217.00,321.52 1218,321.9" fill="none" stroke="#b83040" stroke-width="1.1"/>
</g></g>
<defs><filter id="fb2" x="-20%" y="-20%" width="140%" height="140%"><feGaussianBlur stdDeviation="1.1"/></filter></defs>
<g filter="url(#fb2)">
<path d="M1119,818.6 C1140,818.6 1160,832 1165.5,850 C1168,862 1167,878 1160,890 C1150,906 1135,914.2 1119,914.2 C1102,914.2 1088,905 1080,892 C1072,879 1071,862 1074,848 C1080,830 1100,818.6 1119,818.6 Z" fill="#b83838" transform="translate(1119.3,866.4) scale(1.05) translate(-1119.3,-866.4)"/>
<path d="M1119,818.6 C1140,818.6 1160,832 1165.5,850 C1168,862 1167,878 1160,890 C1150,906 1135,914.2 1119,914.2 C1102,914.2 1088,905 1080,892 C1072,879 1071,862 1074,848 C1080,830 1100,818.6 1119,818.6 Z" fill="#e69a74" transform="translate(1119.3,866.4) scale(1.032) translate(-1119.3,-866.4)"/>
<path d="M1119,818.6 C1140,818.6 1160,832 1165.5,850 C1168,862 1167,878 1160,890 C1150,906 1135,914.2 1119,914.2 C1102,914.2 1088,905 1080,892 C1072,879 1071,862 1074,848 C1080,830 1100,818.6 1119,818.6 Z" fill="#ecd6c8" transform="translate(1119.3,866.4) scale(1.014) translate(-1119.3,-866.4)"/>
<path d="M1119,818.6 C1140,818.6 1160,832 1165.5,850 C1168,862 1167,878 1160,890 C1150,906 1135,914.2 1119,914.2 C1102,914.2 1088,905 1080,892 C1072,879 1071,862 1074,848 C1080,830 1100,818.6 1119,818.6 Z" fill="#c4d0ea" transform="translate(1119.3,866.4) scale(0.996) translate(-1119.3,-866.4)"/>
<path d="M1119,818.6 C1140,818.6 1160,832 1165.5,850 C1168,862 1167,878 1160,890 C1150,906 1135,914.2 1119,914.2 C1102,914.2 1088,905 1080,892 C1072,879 1071,862 1074,848 C1080,830 1100,818.6 1119,818.6 Z" fill="#8098d4" transform="translate(1119.3,866.4) scale(0.976) translate(-1119.3,-866.4)"/>
<path d="M1119,818.6 C1140,818.6 1160,832 1165.5,850 C1168,862 1167,878 1160,890 C1150,906 1135,914.2 1119,914.2 C1102,914.2 1088,905 1080,892 C1072,879 1071,862 1074,848 C1080,830 1100,818.6 1119,818.6 Z" fill="#2f3c90" transform="translate(1119.3,866.4) scale(0.956) translate(-1119.3,-866.4)"/>
</g>
<circle cx="488.7" cy="883" r="4" fill="#f0f000"/>
<line x1="488.7" y1="883" x2="488.7" y2="839" stroke="#00e000" stroke-width="1.1"/>
<path d="M488.7,830.4 L484.8,839.2 L492.6,839.2 Z" fill="#00c800"/>
<line x1="489" y1="883" x2="533" y2="883" stroke="#e01010" stroke-width="1.1"/>
<path d="M541.8,883 L532.5,879.2 L532.5,886.8 Z" fill="#e00000"/>
<text x="491.6" y="840" font-size="16.5" fill="#f4f4f4" textLength="9.0" lengthAdjust="spacingAndGlyphs" stroke="#52576e" stroke-width="0.35">Z</text>
<text x="490.5" y="882.6" font-size="13" fill="#f4f4f4" textLength="10.0" lengthAdjust="spacingAndGlyphs" stroke="#52576e" stroke-width="0.35">Y</text>
<text x="534.6" y="884" font-size="16.5" fill="#f4f4f4" textLength="10.6" lengthAdjust="spacingAndGlyphs" stroke="#52576e" stroke-width="0.35">X</text>
<rect x="1731" y="710.6" width="16.2" height="258" fill="url(#gCbar)"/>
<rect x="1747" y="710.6" width="7.5" height="1.3" fill="#f0f0f0"/>
<text x="1761.5" y="715.2" font-size="15" fill="#f2f2f2" textLength="59.5" lengthAdjust="spacingAndGlyphs" stroke="#52576e" stroke-width="0.3">1.0e+00</text>
<rect x="1747" y="761.6" width="7.5" height="1.3" fill="#f0f0f0"/>
<text x="1761.5" y="766.2" font-size="15" fill="#f2f2f2" textLength="21.0" lengthAdjust="spacingAndGlyphs" stroke="#52576e" stroke-width="0.3">0.8</text>
<rect x="1747" y="814.6999999999999" width="7.5" height="1.3" fill="#f0f0f0"/>
<text x="1761.5" y="819.3" font-size="15" fill="#f2f2f2" textLength="21.0" lengthAdjust="spacingAndGlyphs" stroke="#52576e" stroke-width="0.3">0.6</text>
<rect x="1747" y="865.6999999999999" width="7.5" height="1.3" fill="#f0f0f0"/>
<text x="1761.5" y="870.3" font-size="15" fill="#f2f2f2" textLength="21.0" lengthAdjust="spacingAndGlyphs" stroke="#52576e" stroke-width="0.3">0.4</text>
<rect x="1747" y="917.0" width="7.5" height="1.3" fill="#f0f0f0"/>
<text x="1761.5" y="921.6" font-size="15" fill="#f2f2f2" textLength="21.0" lengthAdjust="spacingAndGlyphs" stroke="#52576e" stroke-width="0.3">0.2</text>
<rect x="1747" y="968.0" width="7.5" height="1.3" fill="#f0f0f0"/>
<text x="1761.5" y="972.6" font-size="15" fill="#f2f2f2" textLength="57.9" lengthAdjust="spacingAndGlyphs" stroke="#52576e" stroke-width="0.3">-4.1e-21</text>
<text x="0" y="0" font-size="15" fill="#f0f0f0" textLength="94" lengthAdjust="spacingAndGlyphs" transform="translate(1837.5,886) rotate(-90)">alpha.water</text>
<rect x="616.5" y="992.5" width="18.5" height="18" fill="url(#gBtn)" stroke="#c8c8c8" stroke-width="1" rx="3"/>
<path d="M623,997.8 L629.5,1004.3 M629.5,997.8 L623,1004.3" fill="none" stroke="#9a9a9a" stroke-width="2.3"/>
<rect x="638.5" y="989.5" width="592" height="24" fill="#efefef"/>
<path d="M638.5,1013.5 V989.5 H1230.5" fill="none" stroke="#9a9a9a" stroke-width="1"/>
<path d="M639,1013.5 H1230.5 V990" fill="none" stroke="#ffffff" stroke-width="1"/>
<rect x="1237.5" y="989.5" width="612.5" height="24" fill="#ffffff" stroke="#8aa58a" stroke-width="1" rx="2.5"/>
<rect x="1238" y="990" width="388.4" height="23" fill="url(#gMem)"/>
<line x1="1626.4" y1="990" x2="1626.4" y2="1013" stroke="#8aa58a" stroke-width="1"/>
<rect x="1852" y="0" width="1" height="1016" fill="#111111"/>
<text x="1421.3" y="1006.7" font-size="15" fill="#000" textLength="244.5" lengthAdjust="spacingAndGlyphs">john-System: 9.8 GiB/15.4 GiB 63.7%</text>
<defs><linearGradient id="gCS" x1="0" y1="0" x2="0" y2="1"><stop offset="0" stop-color="#d0d0d0"/><stop offset="0.46" stop-color="#d0d0d0"/><stop offset="0.48" stop-color="#40c0a0"/><stop offset="0.55" stop-color="#20a8e0"/><stop offset="0.8" stop-color="#2a70c0"/><stop offset="1" stop-color="#6a4a9a"/></linearGradient></defs>
<g transform="translate(18,29)">
<path d="M0.5,20.5 V5 Q0.5,3.5 2,3.5 H6 L7.5,5.5 H14 V20.5 Z" fill="#f2b95a" stroke="#7d7a5c" stroke-width="1"/>
<path d="M4.5,20.5 V9.5 H21.5 V20.5 Z" fill="#f6d86e" stroke="#7d7a5c" stroke-width="1"/>
<path d="M16.5,8.5 V5 H13.5 L17.5,0.5 L21.5,5 H18.5 V8.5 Z" fill="#2a92d8" stroke="#3d6f95" stroke-width="0.7"/>
</g>
<g transform="translate(50,29)">
<path d="M0.5,20.5 V5 Q0.5,3.5 2,3.5 H6 L7.5,5.5 H14 V20.5 Z" fill="#f2b95a" stroke="#7d7a5c" stroke-width="1"/>
<path d="M4.5,20.5 V9.5 H21.5 V20.5 Z" fill="#f6d86e" stroke="#7d7a5c" stroke-width="1"/>
<path d="M15,1.5 H19 V7 H21.5 L17,13 L12.5,7 H15 Z" fill="#a6d48e" stroke="#7d7a5c" stroke-width="1"/>
</g>
<g transform="translate(82,30)">
<rect x="0.5" y="13.5" width="21" height="7.5" fill="#cfd0cf" stroke="#8a8a88" stroke-width="1" rx="2"/>
<circle cx="3.5" cy="17" r="0.9" fill="#777"/>
<path d="M7.5,0.5 H14.5 V7 H18.5 L11,15.5 L3.5,7 H7.5 Z" fill="#a6d48e" stroke="#7d7a5c" stroke-width="1"/>
</g>
<g transform="translate(112.5,29)">
<path d="M1.8,5.6 V1.8 H5.6" fill="none" stroke="#8a7f60" stroke-width="3.0"/>
<path d="M1.8,5.6 V1.8 H5.6" fill="none" stroke="#2a9ad8" stroke-width="1.6"/>
<path d="M22.2,5.6 V1.8 H18.4" fill="none" stroke="#8a7f60" stroke-width="3.0"/>
<path d="M22.2,5.6 V1.8 H18.4" fill="none" stroke="#2a9ad8" stroke-width="1.6"/>
<path d="M1.8,18.4 V22.2 H5.6" fill="none" stroke="#8a7f60" stroke-width="3.0"/>
<path d="M1.8,18.4 V22.2 H5.6" fill="none" stroke="#2a9ad8" stroke-width="1.6"/>
<path d="M22.2,18.4 V22.2 H18.4" fill="none" stroke="#8a7f60" stroke-width="3.0"/>
<path d="M22.2,18.4 V22.2 H18.4" fill="none" stroke="#2a9ad8" stroke-width="1.6"/>
<path d="M18.5,5.1 L17.1,15 L14.4,12.3 L8.6,18.7 L5.2,15.5 L11.2,9.1 L8.6,6.5 Z" fill="#f2bc12" stroke="#8c7a3a" stroke-width="0.8"/>
</g>
<g transform="translate(0,0)">
<path d="M145.3,40.9 L163.5,32.9 L163.5,29.3 L169,34 L164.6,34.8 L159.9,52.4 L156.3,52.4 Z" fill="#ffffff" stroke="#a0a4a8" stroke-width="0.9"/>
<path d="M147.5,41.5 L151.4,39 L150.8,43.9 Z" fill="#d81e2a" stroke="#d81e2a" stroke-width="1.2"/>
<path d="M153.6,37.3 L157,37 L154.7,47.5 L151.5,45.8 Z" fill="#22a046"/>
<path d="M159.2,36.2 L162.6,36.5 L159.6,50.2 L155.9,49.7 Z" fill="#0b519a"/>
</g>
<g transform="translate(0,0)">
<path d="M185.3,32.2 L190.3,30.6 L195.10000000000002,32.4 L191.3,34 Z" fill="#d8dad8" stroke="#7b7b72" stroke-width="0.8"/>
<path d="M185.3,32.2 L191.3,34 V44.8 L185.3,43 Z" fill="#b9baa8" stroke="#7b7b72" stroke-width="0.9"/>
<path d="M191.3,34 L195.10000000000002,32.4 V43.4 L191.3,44.8 Z" fill="#f6eef2" stroke="#7b7b72" stroke-width="0.8"/>
<line x1="192.60000000000002" y1="37" x2="193.9" y2="36.5" stroke="#9a9a9a" stroke-width="0.6"/>
<path d="M195.10000000000002,32.2 L200.10000000000002,30.6 L204.90000000000003,32.4 L201.10000000000002,34 Z" fill="#d8dad8" stroke="#7b7b72" stroke-width="0.8"/>
<path d="M195.10000000000002,32.2 L201.10000000000002,34 V44.8 L195.10000000000002,43 Z" fill="#b9baa8" stroke="#7b7b72" stroke-width="0.9"/>
<path d="M201.10000000000002,34 L204.90000000000003,32.4 V43.4 L201.10000000000002,44.8 Z" fill="#f6eef2" stroke="#7b7b72" stroke-width="0.8"/>
<line x1="202.40000000000003" y1="37" x2="203.70000000000002" y2="36.5" stroke="#9a9a9a" stroke-width="0.6"/>
<path d="M188.5,44.5 V48.8 H201.5 V44.5" fill="none" stroke="#c0c0c0" stroke-width="1.1"/>
<circle cx="195.1" cy="48.9" r="2.6" fill="#9fd88c"/>
</g>
<g transform="translate(0,0)">
<path d="M217.3,32.2 L222.3,30.6 L227.10000000000002,32.4 L223.3,34 Z" fill="#d8dad8" stroke="#7b7b72" stroke-width="0.8"/>
<path d="M217.3,32.2 L223.3,34 V44.8 L217.3,43 Z" fill="#b9baa8" stroke="#7b7b72" stroke-width="0.9"/>
<path d="M223.3,34 L227.10000000000002,32.4 V43.4 L223.3,44.8 Z" fill="#f6eef2" stroke="#7b7b72" stroke-width="0.8"/>
<line x1="224.60000000000002" y1="37" x2="225.9" y2="36.5" stroke="#9a9a9a" stroke-width="0.6"/>
<path d="M227.10000000000002,32.2 L232.10000000000002,30.6 L236.90000000000003,32.4 L233.10000000000002,34 Z" fill="#d8dad8" stroke="#7b7b72" stroke-width="0.8"/>
<path d="M227.10000000000002,32.2 L233.10000000000002,34 V44.8 L227.10000000000002,43 Z" fill="#b9baa8" stroke="#7b7b72" stroke-width="0.9"/>
<path d="M233.10000000000002,34 L236.90000000000003,32.4 V43.4 L233.10000000000002,44.8 Z" fill="#f6eef2" stroke="#7b7b72" stroke-width="0.8"/>
<line x1="234.40000000000003" y1="37" x2="235.70000000000002" y2="36.5" stroke="#9a9a9a" stroke-width="0.6"/>
<path d="M220.5,44.5 V48.8 H233.5 V44.5" fill="none" stroke="#c0c0c0" stroke-width="1.1"/>
<path d="M225.3,47 L229.3,51 M229.3,47 L225.3,51" fill="none" stroke="#e43a30" stroke-width="1.9"/>
</g>
<g transform="translate(0,0)">
<path d="M253.6,33.8 A8.9,8.9 0 1 1 249.8,41.1" fill="none" stroke="#7d7a5c" stroke-width="3.6"/>
<path d="M253.6,33.8 A8.9,8.9 0 1 1 249.8,41.1" fill="none" stroke="#a6d48e" stroke-width="2.2"/>
<path d="M250.2,31.6 L250.2,38.9 L255.2,36.8 Z" fill="#a6d48e" stroke="#7d7a5c" stroke-width="0.8"/>
<line x1="258.7" y1="35.3" x2="258.7" y2="40.8" stroke="#d8a020" stroke-width="1.5"/>
<circle cx="258.7" cy="41.2" r="1.5" fill="#d8a020"/>
</g>
<g transform="translate(287,33.5)">
<g>
<path d="M0.5,11 L6,0.5 L7.5,4.5 C13,1.5 20,3 19.6,9.5 C19.2,13 17,14.5 15.5,15 C16.5,12 15.5,8.8 12.5,8 C11,7.7 9.8,8.2 9.5,9 L12,12 Z" fill="#9c9c9c"/>
</g>
</g>
<g transform="translate(318.5,33.5)">
<g transform="translate(20,0) scale(-1,1)">
<path d="M0.5,11 L6,0.5 L7.5,4.5 C13,1.5 20,3 19.6,9.5 C19.2,13 17,14.5 15.5,15 C16.5,12 15.5,8.8 12.5,8 C11,7.7 9.8,8.2 9.5,9 L12,12 Z" fill="#c8c8c8"/>
</g>
</g>
<g transform="translate(0,0)">
<path d="M376,31.1 L366.2,33.6 L368.6,35.9 L364,40.5 L366.5,43.1 L371.1,38.5 L373.5,40.8 Z" fill="#a6d48e" stroke="#6e9a60" stroke-width="0.9"/>
<path d="M358.2,38.5 L362,36.8 L367.9,38.5 L364.5,40 Z" fill="#e0e0dc" stroke="#7b7b72" stroke-width="0.8"/>
<path d="M358.2,38.5 L364.5,40 V50.3 L358.2,48.8 Z" fill="#b9baa8" stroke="#7b7b72" stroke-width="0.9"/>
<path d="M364.5,40 L367.9,38.5 V48.5 L364.5,50.3 Z" fill="#f6eef2" stroke="#7b7b72" stroke-width="0.8"/>
</g>
<g transform="translate(0,0)">
<rect x="388.8" y="38.7" width="20.3" height="12.1" fill="none" stroke="#8a8a8a" stroke-width="1" stroke-dasharray="2.5,2.8"/>
<rect x="390.7" y="30.7" width="10.5" height="17.6" fill="url(#gCS)" stroke="#707070" stroke-width="1"/>
<path d="M403,44.7 L407.8,46 L406.3,47.2 L409.3,50.2 L408.3,51.2 L405.3,48.2 L404.2,49.6 Z" fill="#505050"/>
</g>
<g transform="translate(420,29.8)">
<path d="M12,0.5 C5,0.5 0.5,5 0.5,11 C0.5,17 5,21.5 12,21.5 C15,21.5 15,18 13,17 C11,16 12.5,13.5 15,14 C18,14.6 21.5,13.5 21.5,10 C21.5,4.5 17,0.5 12,0.5 Z" fill="#f6dbac" stroke="#8a7a5a" stroke-width="0.9"/>
<circle cx="5" cy="7.5" r="1.8" fill="#3aa8e0"/>
<circle cx="10.5" cy="4.2" r="1.8" fill="#5a9a3a"/>
<circle cx="5.3" cy="14.8" r="1.8" fill="#e03a2a"/>
<path d="M7.9,21.5 L16.6,8.4" fill="none" stroke="#7a6030" stroke-width="3.4"/>
<path d="M7.9,21.5 L16.6,8.4" fill="none" stroke="#c09a58" stroke-width="2.0"/>
<ellipse cx="18.6" cy="5.3" rx="1.9" ry="4.2" fill="#ffffff" stroke="#707060" stroke-width="0.7" transform="rotate(35 18.6 5.3)"/>
<path d="M19,21.2 L24,21.2 L21.5,23.8 Z" fill="#505050"/>
</g>
<g transform="translate(470,32.8)">
<rect x="0.5" y="0.5" width="6" height="16" fill="#a6d48e" stroke="#7d7a5c" stroke-width="1" rx="1.2"/>
<path d="M20,0.5 V16.5 L7,8.5 Z" fill="#a6d48e" stroke="#7d7a5c" stroke-width="1"/>
</g>
<g transform="translate(502,32.8)">
<path d="M12,0.5 V16.5 L0,8.5 Z" fill="#a6d48e" stroke="#7d7a5c" stroke-width="1"/>
<rect x="14.3" y="0.5" width="6.3" height="16.5" fill="#a6d48e" stroke="#7d7a5c" stroke-width="1" rx="1.2"/>
</g>
<g transform="translate(539,32.8)">
<path d="M0.5,0.5 V16.5 L12.5,8.5 Z" fill="#a6d48e" stroke="#7d7a5c" stroke-width="1"/>
</g>
<g transform="translate(566,32.8)">
<rect x="0.5" y="0.5" width="6" height="16.5" fill="#a6d48e" stroke="#7d7a5c" stroke-width="1" rx="1.2"/>
<path d="M8.5,0.5 V16.5 L20.5,8.5 Z" fill="#a6d48e" stroke="#7d7a5c" stroke-width="1"/>
</g>
<g transform="translate(598,32.8)">
<path d="M0.5,0.5 V16.5 L13,8.5 Z" fill="#a6d48e" stroke="#7d7a5c" stroke-width="1"/>
<rect x="13.5" y="0.5" width="6.3" height="16.5" fill="#a6d48e" stroke="#7d7a5c" stroke-width="1" rx="1.2"/>
</g>
<g transform="translate(631,31)">
<path d="M1,9 V3.5 H10.5 V0.5 L16.5,4.5 L10.5,8.8 V6 H3.8 V9 Z" fill="#a6d48e" stroke="#7d7a5c" stroke-width="0.9"/>
<path d="M16.5,9 V15 H7 V18.5 L1,14.3 L7,10.2 V12.3 H13.8 V9 Z" fill="#a6d48e" stroke="#7d7a5c" stroke-width="0.9"/>
</g>
<g transform="translate(888,32)">
<path d="M0.5,4 Q0.5,2.5 2,2.5 H4.5 L5.5,0.8 H11 L12,2.5 H14.5 Q16,2.5 16,4 V11 Q16,12.5 14.5,12.5 H2 Q0.5,12.5 0.5,11 Z" fill="#c8c8c8" stroke="#8c8c8c" stroke-width="0.9"/>
<circle cx="8.3" cy="7.3" r="3.3" fill="#d8eefa" stroke="#8c8c8c" stroke-width="1.4"/>
<path d="M15.8,14.5 L21.5,19.5" stroke="#2a96d8" stroke-width="2.6" stroke-linecap="round"/>
<circle cx="14.3" cy="13" r="2.9" fill="#2a96d8"/>
<path d="M12.2,10.6 L14.6,12.9 L13.8,10 Z" fill="#f2f2f2"/>
<path d="M11.6,11.6 L14.2,13.8 L11.3,13.6 Z" fill="#f2f2f2"/>
</g>
<g transform="translate(919.5,32)">
<path d="M0.5,4 Q0.5,2.5 2,2.5 H4.5 L5.5,0.8 H11 L12,2.5 H14.5 Q16,2.5 16,4 V11 Q16,12.5 14.5,12.5 H2 Q0.5,12.5 0.5,11 Z" fill="#c8c8c8" stroke="#8c8c8c" stroke-width="0.9"/>
<circle cx="8.3" cy="7.3" r="3.3" fill="#d8eefa" stroke="#8c8c8c" stroke-width="1.4"/>
<path d="M17.5,11 V20 M13,15.5 H22" fill="none" stroke="#2a96d8" stroke-width="2.8"/>
</g>
<rect x="23.5" y="70.5" width="11" height="18.5" fill="url(#gCBI)" stroke="#7d7a5c" stroke-width="0.9"/>
<rect x="51.5" y="77.5" width="19" height="11" fill="url(#gCBH)" stroke="#7d7a5c" stroke-width="0.9"/>
<line x1="61.5" y1="78" x2="61.5" y2="88" stroke="#8a8060" stroke-width="0.8"/>
<line x1="64.5" y1="80" x2="64.5" y2="86" stroke="#8a8060" stroke-width="0.8"/>
<circle cx="56.9" cy="75.4" r="5.8" fill="#a6d48e" stroke="#7d7a5c" stroke-width="0.9"/>
<rect x="83.5" y="77.5" width="19" height="11" fill="url(#gCBH)" stroke="#7d7a5c" stroke-width="0.9"/>
<path d="M90,72.5 A3.8,3.8 0 1 1 95,78.5 L92.5,81 M86.5,77 A3.6,3.6 0 1 0 89.5,83.8" fill="none" stroke="#111" stroke-width="2.2"/>
<line x1="84" y1="70.5" x2="86" y2="72.5" stroke="#111" stroke-width="0.8"/>
<line x1="82.8" y1="73.5" x2="85" y2="74" stroke="#111" stroke-width="0.8"/>
<line x1="86" y1="69.5" x2="87" y2="71.8" stroke="#111" stroke-width="0.8"/>
<path d="M114.5,75.8 L119.5,71 V73.5 H130.5 V71 L135.5,75.8 L130.5,80.6 V78 H119.5 V80.6 Z" fill="#a6d48e" stroke="#7d7a5c" stroke-width="0.8"/>
<line x1="114" y1="85.6" x2="136" y2="85.6" stroke="#8a8a6a" stroke-width="1"/>
<line x1="114.4" y1="81.2" x2="114.4" y2="89.3" stroke="#8a8a6a" stroke-width="1"/>
<line x1="121.6" y1="83" x2="121.6" y2="87.4" stroke="#8a8a6a" stroke-width="1"/>
<line x1="128.4" y1="83" x2="128.4" y2="87.4" stroke="#8a8a6a" stroke-width="1"/>
<line x1="135.4" y1="81.2" x2="135.4" y2="89.3" stroke="#8a8a6a" stroke-width="1"/>
<path d="M146.5,75.8 L151.5,71 V73.5 H162.5 V71 L167.5,75.8 L162.5,80.6 V78 H151.5 V80.6 Z" fill="#a6d48e" stroke="#7d7a5c" stroke-width="0.8"/>
<line x1="146" y1="85.6" x2="168" y2="85.6" stroke="#8a8a6a" stroke-width="1"/>
<line x1="146.4" y1="81.2" x2="146.4" y2="89.3" stroke="#8a8a6a" stroke-width="1"/>
<line x1="153.6" y1="83" x2="153.6" y2="87.4" stroke="#8a8a6a" stroke-width="1"/>
<line x1="160.4" y1="83" x2="160.4" y2="87.4" stroke="#8a8a6a" stroke-width="1"/>
<line x1="167.4" y1="81.2" x2="167.4" y2="89.3" stroke="#8a8a6a" stroke-width="1"/>
<text x="159.5" y="88.7" font-size="12" font-weight="bold" fill="#111">c</text>
<path d="M178.7,75.8 L183.7,71 V73.5 H194.7 V71 L199.7,75.8 L194.7,80.6 V78 H183.7 V80.6 Z" fill="#a6d48e" stroke="#7d7a5c" stroke-width="0.8"/>
<line x1="178.2" y1="85.6" x2="200.2" y2="85.6" stroke="#8a8a6a" stroke-width="1"/>
<line x1="178.6" y1="81.2" x2="178.6" y2="89.3" stroke="#8a8a6a" stroke-width="1"/>
<line x1="185.79999999999998" y1="83" x2="185.79999999999998" y2="87.4" stroke="#8a8a6a" stroke-width="1"/>
<line x1="192.6" y1="83" x2="192.6" y2="87.4" stroke="#8a8a6a" stroke-width="1"/>
<line x1="199.6" y1="81.2" x2="199.6" y2="89.3" stroke="#8a8a6a" stroke-width="1"/>
<text x="194.2" y="88.8" font-size="12.5" font-weight="bold" fill="#111">t</text>
<path d="M210.3,75.8 L215.3,71 V73.5 H226.3 V71 L231.3,75.8 L226.3,80.6 V78 H215.3 V80.6 Z" fill="#a6d48e" stroke="#7d7a5c" stroke-width="0.8"/>
<line x1="209.8" y1="85.6" x2="231.8" y2="85.6" stroke="#8a8a6a" stroke-width="1"/>
<line x1="210.20000000000002" y1="81.2" x2="210.20000000000002" y2="89.3" stroke="#8a8a6a" stroke-width="1"/>
<line x1="217.4" y1="83" x2="217.4" y2="87.4" stroke="#8a8a6a" stroke-width="1"/>
<line x1="224.20000000000002" y1="83" x2="224.20000000000002" y2="87.4" stroke="#8a8a6a" stroke-width="1"/>
<line x1="231.20000000000002" y1="81.2" x2="231.20000000000002" y2="89.3" stroke="#8a8a6a" stroke-width="1"/>
<path d="M221.8,85.2 Q226.8,79.8 231.8,85.2 Q226.8,90.6 221.8,85.2 Z" fill="#111"/>
<circle cx="226.8" cy="85.2" r="1.6" fill="#ffffff"/>
<line x1="714.8" y1="70.8" x2="734" y2="89.6" stroke="#7d7a5c" stroke-width="1.6"/>
<line x1="734" y1="70.8" x2="714.8" y2="89.6" stroke="#7d7a5c" stroke-width="1.6"/>
<path d="M713.80,69.80 L720.31,71.78 L715.78,76.31 Z" fill="#a6d48e" stroke="#7d7a5c" stroke-width="0.8"/>
<path d="M735.00,69.80 L733.02,76.31 L728.49,71.78 Z" fill="#a6d48e" stroke="#7d7a5c" stroke-width="0.8"/>
<path d="M713.80,90.60 L715.78,84.09 L720.31,88.62 Z" fill="#a6d48e" stroke="#7d7a5c" stroke-width="0.8"/>
<path d="M735.00,90.60 L728.49,88.62 L733.02,84.09 Z" fill="#a6d48e" stroke="#7d7a5c" stroke-width="0.8"/>
<circle cx="755.9" cy="79.8" r="3.2" fill="#2a92d2" stroke="#7d7a5c" stroke-width="0.6"/>
<path d="M751.50,75.40 L745.14,73.28 L749.38,69.04 Z" fill="#a6d48e" stroke="#7d7a5c" stroke-width="0.8"/>
<path d="M760.30,75.40 L762.42,69.04 L766.66,73.28 Z" fill="#a6d48e" stroke="#7d7a5c" stroke-width="0.8"/>
<path d="M751.50,84.20 L749.38,90.56 L745.14,86.32 Z" fill="#a6d48e" stroke="#7d7a5c" stroke-width="0.8"/>
<path d="M760.30,84.20 L766.66,86.32 L762.42,90.56 Z" fill="#a6d48e" stroke="#7d7a5c" stroke-width="0.8"/>
<circle cx="787.9" cy="79.8" r="10.4" fill="#2a96d8" stroke="#7d7a5c" stroke-width="0.9"/>
<line x1="782.5" y1="74.4" x2="793.3" y2="85.2" stroke="#7d7a5c" stroke-width="1.2"/>
<line x1="793.3" y1="74.4" x2="782.5" y2="85.2" stroke="#7d7a5c" stroke-width="1.2"/>
<path d="M781.80,73.70 L787.17,75.40 L783.50,79.07 Z" fill="#a6d48e" stroke="#7d7a5c" stroke-width="0.8"/>
<path d="M794.00,73.70 L792.30,79.07 L788.63,75.40 Z" fill="#a6d48e" stroke="#7d7a5c" stroke-width="0.8"/>
<path d="M781.80,85.90 L783.50,80.53 L787.17,84.20 Z" fill="#a6d48e" stroke="#7d7a5c" stroke-width="0.8"/>
<path d="M794.00,85.90 L788.63,84.20 L792.30,80.53 Z" fill="#a6d48e" stroke="#7d7a5c" stroke-width="0.8"/>
<rect x="810" y="70.2" width="20.3" height="19.8" fill="#2a96d8" stroke="#7d7a5c" stroke-width="0.9" rx="6"/>
<path d="M815.80,76.00 L809.44,73.88 L813.68,69.64 Z" fill="#a6d48e" stroke="#7d7a5c" stroke-width="0.8"/>
<path d="M824.50,76.00 L826.62,69.64 L830.86,73.88 Z" fill="#a6d48e" stroke="#7d7a5c" stroke-width="0.8"/>
<path d="M815.80,84.20 L813.68,90.56 L809.44,86.32 Z" fill="#a6d48e" stroke="#7d7a5c" stroke-width="0.8"/>
<path d="M824.50,84.20 L830.86,86.32 L826.62,90.56 Z" fill="#a6d48e" stroke="#7d7a5c" stroke-width="0.8"/>
<path d="M841.9,86 V69.7 H858.2 V73" fill="none" stroke="#8a8a8a" stroke-width="1.1" stroke-dasharray="3,2.5"/>
<line x1="857" y1="84.5" x2="862" y2="89.5" stroke="#9a9a9a" stroke-width="2.2"/>
<circle cx="853.5" cy="80.8" r="5" fill="#d8ecf8" stroke="#9a9a9a" stroke-width="1.8"/>
<path d="M888.4000000000001,82.8 V75 H886.6 L890.2,69.4 L893.8000000000001,75 H892.0 V82.8 Z" fill="#a6d48e" stroke="#7d7a5c" stroke-width="0.8"/>
<path d="M886.6,85.2 H878.8000000000001 V83.2 L873.2,86.5 L878.8000000000001,89.8 V87.8 H886.6 Z" fill="#f2bc12" stroke="#7d7a5c" stroke-width="0.8"/>
<rect x="887.0" y="82.9" width="7" height="7" fill="#e04030" stroke="#7d7a5c" stroke-width="0.9"/>
<text x="874" y="79.6" font-size="10" font-weight="bold" fill="#6c6c6c" textLength="11.0" lengthAdjust="spacingAndGlyphs">+X</text>
<path d="M907.8000000000001,82.8 V75 H906.0 L909.6,69.4 L913.2,75 H911.4 V82.8 Z" fill="#a6d48e" stroke="#7d7a5c" stroke-width="0.8"/>
<path d="M913.2,85.2 H921.0 V83.2 L926.6,86.5 L921.0,89.8 V87.8 H913.2 Z" fill="#f2bc12" stroke="#7d7a5c" stroke-width="0.8"/>
<rect x="906.4" y="82.9" width="7" height="7" fill="#e04030" stroke="#7d7a5c" stroke-width="0.9"/>
<text x="914.6" y="79.6" font-size="10" font-weight="bold" fill="#6c6c6c" textLength="9.6" lengthAdjust="spacingAndGlyphs">-X</text>
<path d="M939.8000000000001,82.8 V75 H938.0 L941.6,69.4 L945.2,75 H943.4 V82.8 Z" fill="#a6d48e" stroke="#7d7a5c" stroke-width="0.8"/>
<path d="M945.2,85.2 H953.0 V83.2 L958.6,86.5 L953.0,89.8 V87.8 H945.2 Z" fill="#e04030" stroke="#7d7a5c" stroke-width="0.8"/>
<rect x="938.4" y="82.9" width="7" height="7" fill="#f2bc12" stroke="#7d7a5c" stroke-width="0.9"/>
<text x="946.6" y="79.6" font-size="10" font-weight="bold" fill="#6c6c6c" textLength="11.0" lengthAdjust="spacingAndGlyphs">+Y</text>
<path d="M984.2,82.8 V75 H982.4 L986.0,69.4 L989.6,75 H987.8 V82.8 Z" fill="#a6d48e" stroke="#7d7a5c" stroke-width="0.8"/>
<path d="M982.4,85.2 H974.6 V83.2 L969.0,86.5 L974.6,89.8 V87.8 H982.4 Z" fill="#e04030" stroke="#7d7a5c" stroke-width="0.8"/>
<rect x="982.8" y="82.9" width="7" height="7" fill="#f2bc12" stroke="#7d7a5c" stroke-width="0.9"/>
<text x="970.3" y="79.6" font-size="10" font-weight="bold" fill="#6c6c6c" textLength="10.2" lengthAdjust="spacingAndGlyphs">-Y</text>
<path d="M1016.2,82.8 V75 H1014.4 L1018.0,69.4 L1021.6,75 H1019.8 V82.8 Z" fill="#f2bc12" stroke="#7d7a5c" stroke-width="0.8"/>
<path d="M1014.4,85.2 H1006.6 V83.2 L1001.0,86.5 L1006.6,89.8 V87.8 H1014.4 Z" fill="#e04030" stroke="#7d7a5c" stroke-width="0.8"/>
<rect x="1014.8" y="82.9" width="7" height="7" fill="#a6d48e" stroke="#7d7a5c" stroke-width="0.9"/>
<text x="1001.8" y="79.6" font-size="10" font-weight="bold" fill="#6c6c6c" textLength="10.6" lengthAdjust="spacingAndGlyphs">+Z</text>
<path d="M1035.8,82.8 V75 H1034.0 L1037.6,69.4 L1041.1999999999998,75 H1039.3999999999999 V82.8 Z" fill="#f2bc12" stroke="#7d7a5c" stroke-width="0.8"/>
<path d="M1041.2,85.2 H1049.0000000000002 V83.2 L1054.6000000000001,86.5 L1049.0000000000002,89.8 V87.8 H1041.2 Z" fill="#e04030" stroke="#7d7a5c" stroke-width="0.8"/>
<rect x="1034.4" y="82.9" width="7" height="7" fill="#a6d48e" stroke="#7d7a5c" stroke-width="0.9"/>
<text x="1042.7" y="79.6" font-size="10" font-weight="bold" fill="#6c6c6c" textLength="8.8" lengthAdjust="spacingAndGlyphs">-Z</text>
<path d="M1073.9,82.89999999999999 A6.8,6.8 0 1 1 1078.5,72.6" fill="none" stroke="#7d7a5c" stroke-width="3.4"/>
<path d="M1073.9,82.89999999999999 A6.8,6.8 0 1 1 1078.5,72.6" fill="none" stroke="#a6d48e" stroke-width="2.0"/>
<path d="M1080.40,77.90 L1076.01,74.41 L1082.14,72.57 Z" fill="#a6d48e" stroke="#7d7a5c" stroke-width="0.8"/>
<text x="1072" y="89.9" font-size="9.5" font-weight="bold" fill="#7a7a7a" textLength="14.7" lengthAdjust="spacingAndGlyphs">+90</text>
<path d="M1110.3,82.89999999999999 A6.8,6.8 0 1 0 1105.7,72.6" fill="none" stroke="#7d7a5c" stroke-width="3.4"/>
<path d="M1110.3,82.89999999999999 A6.8,6.8 0 1 0 1105.7,72.6" fill="none" stroke="#a6d48e" stroke-width="2.0"/>
<path d="M1103.80,77.90 L1102.06,72.57 L1108.19,74.41 Z" fill="#a6d48e" stroke="#7d7a5c" stroke-width="0.8"/>
<text x="1097.5" y="89.9" font-size="9.5" font-weight="bold" fill="#7a7a7a" textLength="12.7" lengthAdjust="spacingAndGlyphs">-90</text>
<path d="M1153,82.8 V76 H1151.5 L1154,72.2 L1156.5,76 H1155 V82.8 Z" fill="#f2bc12" stroke="#b09030" stroke-width="0.5"/>
<path d="M1155,81.8 H1161.5 V80.2 L1165.5,82.6 L1161.5,85 V83.4 H1155 Z" fill="#e86a40" stroke="#c05030" stroke-width="0.4"/>
<path d="M1154.5,83.5 L1151.3,86.7 L1150.2,85.6 L1149,89 L1152.4,87.8 L1151.3,86.7 Z" fill="#58c040" stroke="#40a030" stroke-width="0.8"/>
<line x1="1154.5" y1="83.5" x2="1151.5" y2="86.5" stroke="#58c040" stroke-width="1.5"/>
<path d="M1157.3,74.8 Q1162.3,69.8 1167.3,74.8 Q1162.3,79.8 1157.3,74.8 Z" fill="#ffffff" stroke="#5050a0" stroke-width="0.7"/>
<circle cx="1162.3" cy="74.8" r="2.4" fill="#3a3aa0"/>
<circle cx="1162.3" cy="74.8" r="1.1" fill="#000"/>
<path d="M1197.6,81.4 A8.6,8.6 0 1 1 1195.0,73.9" fill="none" stroke="#7d7a5c" stroke-width="3.6"/>
<path d="M1197.6,81.4 A8.6,8.6 0 1 1 1195.0,73.9" fill="none" stroke="#a6d48e" stroke-width="2.3"/>
<path d="M1197.8,71.80000000000001 L1197.8,77.9 L1192.3,75.10000000000001 Z" fill="#a6d48e" stroke="#7d7a5c" stroke-width="0.8"/>
<circle cx="1188.8" cy="79.9" r="2.5" fill="#f6c000" stroke="#c8a020" stroke-width="0.5"/>
<path d="M1229.6,81.4 A8.6,8.6 0 1 1 1227.0,73.9" fill="none" stroke="#7d7a5c" stroke-width="3.6"/>
<path d="M1229.6,81.4 A8.6,8.6 0 1 1 1227.0,73.9" fill="none" stroke="#a6d48e" stroke-width="2.3"/>
<path d="M1229.8,71.80000000000001 L1229.8,77.9 L1224.3,75.10000000000001 Z" fill="#a6d48e" stroke="#7d7a5c" stroke-width="0.8"/>
<circle cx="1220.8" cy="79.9" r="2.5" fill="#f6c000" stroke="#c8a020" stroke-width="0.5"/>
<rect x="1220.2" y="74.80000000000001" width="1.2" height="1.2" fill="#a0a090"/>
<rect x="1220.2" y="83.80000000000001" width="1.2" height="1.2" fill="#a0a090"/>
<rect x="1215.7" y="79.30000000000001" width="1.2" height="1.2" fill="#a0a090"/>
<rect x="1224.7" y="79.30000000000001" width="1.2" height="1.2" fill="#a0a090"/>
<path d="M1261.1,81.4 A8.6,8.6 0 1 1 1258.5,73.9" fill="none" stroke="#7d7a5c" stroke-width="3.6"/>
<path d="M1261.1,81.4 A8.6,8.6 0 1 1 1258.5,73.9" fill="none" stroke="#a6d48e" stroke-width="2.3"/>
<path d="M1261.3,71.80000000000001 L1261.3,77.9 L1255.8,75.10000000000001 Z" fill="#a6d48e" stroke="#7d7a5c" stroke-width="0.8"/>
<path d="M1256.8,83.4 L1256.8,89.4 L1258.5,87.9 L1260.6,90.4 L1261.8,89.5 L1259.8999999999999,87.0 L1262.1,86.5 Z" fill="#111"/>
<g transform="translate(20,108)">
<rect x="0.5" y="0.5" width="17" height="21.5" fill="#d2d4d4" stroke="#9c9c9c" stroke-width="1" rx="3"/>
<rect x="2.5" y="2.5" width="13" height="4" fill="#cfe6f8" stroke="#a0a8b0" stroke-width="0.6" rx="1.5"/>
<circle cx="3.9" cy="10.2" r="1.4" fill="#6e6a52"/>
<circle cx="8.5" cy="10.2" r="1.4" fill="#6e6a52"/>
<circle cx="12.9" cy="10.2" r="1.4" fill="#6e6a52"/>
<circle cx="3.9" cy="14.5" r="1.4" fill="#6e6a52"/>
<circle cx="8.5" cy="14.5" r="1.4" fill="#6e6a52"/>
<circle cx="12.9" cy="14.5" r="1.4" fill="#6e6a52"/>
<circle cx="3.9" cy="18.7" r="1.4" fill="#6e6a52"/>
<circle cx="8.5" cy="18.7" r="1.4" fill="#6e6a52"/>
<circle cx="12.9" cy="18.7" r="1.4" fill="#6e6a52"/>
</g>
<g transform="translate(51.5,108)">
<g transform="rotate(40 10.7 10.7)">
<path d="M-0.3,11 A11,11 0 0 1 21.7,11 A11,7.2 0 0 1 -0.3,11 Z" fill="#6cbc48" stroke="#7d7a5c" stroke-width="0.9"/>
<path d="M-0.3,11 A11,7.2 0 0 0 21.7,11 L19.5,11 A8.8,4.9 0 0 1 1.9,11 Z" fill="#a6d48e"/>
<path d="M-0.3,11 A11,7.2 0 0 0 21.7,11" fill="none" stroke="#7d7a5c" stroke-width="0.9"/>
<ellipse cx="10.7" cy="11.5" rx="8.6" ry="4.8" fill="#a8d0f0" stroke="#3090c8" stroke-width="1"/>
<ellipse cx="10.7" cy="11.8" rx="4.6" ry="2.4" fill="none" stroke="#7d9aa8" stroke-width="0.8"/>
</g>
</g>
<g transform="translate(85,108)">
<path d="M0.8,2.8 L4,4.8 L4,18 L0.8,15.5 Z" fill="#6cbc48"/>
<path d="M0.8,2.8 L14.5,0.8 L14,3 L4,4.8 Z" fill="#6cbc48"/>
<path d="M3.5,4.5 L13.5,2.8 L14.5,15 L4.5,17.5 Z" fill="#a6d48e" stroke="#7d7a5c" stroke-width="0.9"/>
<path d="M0.5,2.5 L14.5,0.5 L20.7,3.8 L20.7,16 L8,21.5 L0.5,15.5 Z" fill="none" stroke="#7d7a5c" stroke-width="1.1"/>
<path d="M0.5,2.5 L8,7.5 L20.7,3.8 M8,7.5 V21.5" fill="none" stroke="#7d7a5c" stroke-width="1.1"/>
</g>
<g transform="translate(118,108)">
<path d="M3.5,4.5 L13.5,2.8 L14.5,15 L4.5,17.5 Z" fill="#a6d48e" stroke="#7d7a5c" stroke-width="0.9"/>
<path d="M0.5,2.5 L14.5,0.5 L20.7,3.8 L20.7,16 L8,21.5 L0.5,15.5 Z" fill="none" stroke="#7d7a5c" stroke-width="1.1"/>
<path d="M0.5,2.5 L8,7.5 L20.7,3.8 M8,7.5 V21.5" fill="none" stroke="#7d7a5c" stroke-width="1.1"/>
</g>
<g transform="translate(150.5,108)">
<path d="M0.5,2.5 L14.5,0.5 L20.7,3.8 L20.7,16 L8,21.5 L0.5,15.5 Z" fill="none" stroke="#7d7a5c" stroke-width="1.1"/>
<path d="M0.5,2.5 L8,7.5 L20.7,3.8 M8,7.5 V21.5" fill="none" stroke="#7d7a5c" stroke-width="1.1"/>
<path d="M1.5,4 L5.5,6.5 V12.5 L1.5,10.2 Z" fill="#6cbc48"/>
<path d="M5.5,6.5 L8,7.8 V13 L5.5,12.5 Z" fill="#a6d48e"/>
<path d="M10,6.8 L18.5,4.5 V14 L13.5,16.3 V9 L10,10 Z" fill="#a6d48e" stroke="#7d7a5c" stroke-width="0.7"/>
<path d="M10,6.8 L18.5,4.5 L17,3.6 L9,5.5 Z" fill="#6cbc48"/>
</g>
<g transform="translate(183.5,108)">
<path d="M0.5,2.5 L14.5,0.5 L20.7,3.8 L20.7,16 L8,21.5 L0.5,15.5 Z" fill="#ececec" stroke="#b0b0b0" stroke-width="1.3"/>
<path d="M3.5,4.5 L12,3 L16.5,5 V12.5 L8,15 L3.5,12.5 Z" fill="#a0a0a0"/>
<path d="M8,7.5 L16.5,5 V12.5 L8,15 Z" fill="#d0d0d0"/>
<path d="M0.5,2.5 L8,7.5 L20.7,3.8 M8,7.5 V21.5" fill="none" stroke="#b8b8b8" stroke-width="1.3"/>
</g>
<g transform="translate(0,0)">
<circle cx="226.8" cy="118.5" r="9" fill="#d4e8f8" stroke="#6a6a5a" stroke-width="1.1"/>
<path d="M218.5,115.7 Q226.8,114.3 235.1,115.7 M218.5,121.3 Q226.8,122.7 235.1,121.3" fill="none" stroke="#5a5a50" stroke-width="1.1"/>
<path d="M226.8,109.5 Q218.3,118.5 226.8,127.5 M226.8,109.5 Q235.3,118.5 226.8,127.5" fill="none" stroke="#5a5a50" stroke-width="1.1"/>
<circle cx="226.8" cy="109.4" r="1.9" fill="#8cc870" stroke="#5a7a48" stroke-width="0.8"/>
<circle cx="226.8" cy="127.6" r="1.9" fill="#8cc870" stroke="#5a7a48" stroke-width="0.8"/>
<circle cx="217.9" cy="118.3" r="1.9" fill="#8cc870" stroke="#5a7a48" stroke-width="0.8"/>
<circle cx="235.7" cy="118.3" r="1.9" fill="#8cc870" stroke="#5a7a48" stroke-width="0.8"/>
<circle cx="222.6" cy="121.5" r="1.9" fill="#8cc870" stroke="#5a7a48" stroke-width="0.8"/>
<circle cx="231" cy="121.5" r="1.9" fill="#8cc870" stroke="#5a7a48" stroke-width="0.8"/>
<rect x="221.9" y="114.6" width="2.2" height="2.2" fill="#e4f6ec"/>
<rect x="229.9" y="114.6" width="2.2" height="2.2" fill="#e4f6ec"/>
</g>
<g transform="translate(251,107.8)">
<path d="M0.5,8.0 C2.5,1.0 8,1.0 11,6.0 H18" fill="none" stroke="#8a8a70" stroke-width="1"/>
<path d="M0.5,10.5 C2.5,5.8 8,5.8 11,8.5 H18" fill="none" stroke="#8a8a70" stroke-width="1"/>
<path d="M0.5,13.0 C2.5,20.0 8,20.0 11,15.0 H18" fill="none" stroke="#8a8a70" stroke-width="1"/>
<path d="M0.5,10.5 C2.5,15.2 8,15.2 11,12.5 H18" fill="none" stroke="#8a8a70" stroke-width="1"/>
<circle cx="6" cy="10.7" r="3.8" fill="#a6d48e" stroke="#7d7a5c" stroke-width="0.9"/>
</g>
<g transform="translate(282,111.5)">
<path d="M0.5,8 L15,10.8 L15,15.5 L0.5,15.5 Z" fill="#d0eadf" stroke="#7d7a5c" stroke-width="0.9"/>
<path d="M0.5,15.5 V10.5 C7,9 11,6 13.5,0.5 L20.5,3.5 C18,10 13,15 0.5,15.5 Z" fill="#a8c890" stroke="#7d7a5c" stroke-width="0.9"/>
</g>
<g transform="translate(317,109.7)">
<circle cx="9" cy="9" r="8.4" fill="none" stroke="#8a8a7c" stroke-width="0.9"/>
<circle cx="6" cy="5.5" r="2.2" fill="#d8ecec" stroke="#8a8a7c" stroke-width="0.7"/>
<circle cx="11.2" cy="10.7" r="3.5" fill="#a6d48e" stroke="#7d7a5c" stroke-width="0.8"/>
<circle cx="5" cy="12" r="1.5" fill="#a6d48e" stroke="#7d7a5c" stroke-width="0.7"/>
</g>
<g transform="translate(347.5,106.5)">
<circle cx="11" cy="11.5" r="8.3" fill="none" stroke="#8a8a7c" stroke-width="0.9"/>
<circle cx="2.2" cy="2.2" r="2" fill="#d8ecec" stroke="#8a8a7c" stroke-width="0.7"/>
<circle cx="13" cy="11" r="3.3" fill="#a6d48e" stroke="#7d7a5c" stroke-width="0.8"/>
<circle cx="6.6" cy="13.5" r="1.5" fill="#a6d48e" stroke="#7d7a5c" stroke-width="0.7"/>
</g>
<g transform="translate(400,111)">
<path d="M0.5,0.5 V15.5 H15.5" fill="none" stroke="#7d7a5c" stroke-width="1.1"/>
<line x1="8" y1="1" x2="8" y2="14" stroke="#2a8ad0" stroke-width="1"/>
<line x1="6" y1="1.5" x2="10" y2="1.5" stroke="#2a8ad0" stroke-width="1"/>
<line x1="6" y1="13.5" x2="10" y2="13.5" stroke="#2a8ad0" stroke-width="1"/>
<rect x="6" y="4" width="4" height="6.5" fill="#ffffff" stroke="#2a8ad0" stroke-width="1"/>
<line x1="6" y1="7" x2="10" y2="7" stroke="#2a8ad0" stroke-width="0.8"/>
</g>
<g transform="translate(431.5,109)">
<path d="M0.5,0.5 H14 V9.5 H9.5 V14.5 H0.5 Z" fill="#cfe4f6" stroke="#8a9ab0" stroke-width="1"/>
<rect x="10.5" y="10.5" width="8" height="8" fill="#a6d48e"/>
<rect x="10.5" y="10.5" width="8" height="8" fill="none" stroke="#6a9a50" stroke-width="1" stroke-dasharray="1.5,1.2"/>
</g>
<g transform="translate(462,106.7)">
<path d="M0.5,0 V24 H24" fill="none" stroke="#7d7a5c" stroke-width="1"/>
<rect x="2" y="20.5" width="3" height="3" fill="#3a70b0"/>
<rect x="5" y="12.5" width="3" height="11" fill="#1a90f0"/>
<rect x="8" y="5.5" width="3" height="18" fill="#60c0a0"/>
<rect x="11" y="0.5" width="3" height="23" fill="#60b040"/>
<rect x="14" y="8.5" width="3" height="15" fill="#a0c840"/>
<rect x="17" y="14.5" width="3" height="9" fill="#f0d000"/>
<rect x="20" y="18.5" width="3" height="5" fill="#f0b010"/>
</g>
<g transform="translate(497,109.5)">
<circle cx="3.5" cy="3.5" r="3" fill="#ffffff" stroke="#7b7b72" stroke-width="0.9"/>
<path d="M3.5,1.5 V3.5 L5,5" fill="none" stroke="#3a6aa8" stroke-width="0.8"/>
<circle cx="13.5" cy="3.5" r="3.2" fill="#c8a860" stroke="#8a7a4a" stroke-width="1.2"/>
<path d="M1,14 V16.5 H19" fill="none" stroke="#9a9a9a" stroke-width="1"/>
<path d="M1.5,13 H4 L5,10 L6.5,15 L8,10 L9.5,15 L11,10 L12.5,15 L14,11 L15.5,14 L18.5,13" fill="none" stroke="#2a80d0" stroke-width="1"/>
</g>
<g transform="translate(530,108.6)">
<path d="M1,1 L17,4 L19.5,12.5 L15.5,19.5 L4,19.5 Z" fill="#8cc070" stroke="#7d7a5c" stroke-width="0.8"/>
<line x1="3" y1="19.5" x2="20" y2="5.5" stroke="#2a80d0" stroke-width="1.4"/>
<path d="M5,15 L7,17 L8,13.5 L10,15.5 L11,12 L13,14 L14,10.5 L16,12.5 L17,9" fill="none" stroke="#2a80d0" stroke-width="0.9"/>
<line x1="1" y1="12.5" x2="4" y2="15.5" stroke="#7d7a5c" stroke-width="0.8"/>
<line x1="12" y1="0.5" x2="15" y2="3.5" stroke="#7d7a5c" stroke-width="0.8"/>
</g>
<g transform="translate(563,109.5)">
<circle cx="3.5" cy="3.5" r="3" fill="#ffffff" stroke="#7b7b72" stroke-width="0.9"/>
<path d="M3.5,1.5 V3.5 L5,5" fill="none" stroke="#3a6aa8" stroke-width="0.8"/>
<rect x="10.5" y="0.5" width="6.5" height="6" fill="none" stroke="#8a8a8a" stroke-width="0.8"/>
<path d="M11.5,5.5 L13.8,1.8 L16,5.5 Z" fill="#a6d48e"/>
<path d="M1,14 V16.5 H19" fill="none" stroke="#9a9a9a" stroke-width="1"/>
<path d="M1.5,13 H4 L5,10 L6.5,15 L8,10 L9.5,15 L11,10 L12.5,15 L14,11 L15.5,14 L18.5,13" fill="none" stroke="#2a80d0" stroke-width="1"/>
</g>
<g transform="translate(595,107.8)">
<path d="M11,0.5 L21,4.5 V17.5 L11,22 L1,17.5 V4.5 Z" fill="#d4e8f6" stroke="#c8d4dc" stroke-width="1.2"/>
<path d="M1,4.5 L11,8.5 L21,4.5 M11,8.5 V22" fill="none" stroke="#c8d4dc" stroke-width="0.9"/>
<path d="M11,5 V17 M5.5,8 L16.5,14.5 M16.5,8 L5.5,14.5" fill="none" stroke="#707880" stroke-width="1"/>
</g>
<text x="626.8" y="126.8" font-size="20" fill="#6a6a6a" textLength="7" lengthAdjust="spacingAndGlyphs">{</text>
<text x="643.8" y="126.8" font-size="20" fill="#6a6a6a" textLength="7" lengthAdjust="spacingAndGlyphs">}</text>
<circle cx="635.8" cy="124.3" r="1.2" fill="#3a8ad0"/>
<circle cx="639.3" cy="124.3" r="1.2" fill="#3a8ad0"/>
<circle cx="642.8" cy="124.3" r="1.2" fill="#3a8ad0"/>
<g transform="translate(801,108)">
<path d="M0.5,17 L17,0.5 L21.5,5 L5,21.5 Z" fill="#f2bc12" stroke="#8a7a3a" stroke-width="0.9"/>
<line x1="3.5" y1="17.0" x2="5.0" y2="18.5" stroke="#7a6a30" stroke-width="0.8"/>
<line x1="5.4" y1="15.1" x2="6.9" y2="16.6" stroke="#7a6a30" stroke-width="0.8"/>
<line x1="7.3" y1="13.2" x2="8.8" y2="14.7" stroke="#7a6a30" stroke-width="0.8"/>
<line x1="9.2" y1="11.3" x2="10.7" y2="12.8" stroke="#7a6a30" stroke-width="0.8"/>
<line x1="11.1" y1="9.4" x2="12.6" y2="10.9" stroke="#7a6a30" stroke-width="0.8"/>
<line x1="13.0" y1="7.5" x2="14.5" y2="9.0" stroke="#7a6a30" stroke-width="0.8"/>
<line x1="14.899999999999999" y1="5.600000000000001" x2="16.4" y2="7.100000000000001" stroke="#7a6a30" stroke-width="0.8"/>
<line x1="16.799999999999997" y1="3.700000000000001" x2="18.299999999999997" y2="5.200000000000001" stroke="#7a6a30" stroke-width="0.8"/>
</g>
<g transform="translate(393,171.5)">
<path d="M0.5,4.5 Q0.5,3 2,3 H4.5 L5.5,1 H11.5 L12.5,3 H14.5 Q16,3 16,4.5 V11.5 Q16,13 14.5,13 H2 Q0.5,13 0.5,11.5 Z" fill="#c6c6c6" stroke="#8c8c8c" stroke-width="0.9"/>
<circle cx="8.3" cy="8" r="3.4" fill="#d8eefa" stroke="#8c8c8c" stroke-width="1.4"/>
<rect x="2" y="2.5" width="1" height="1" fill="#e03030"/>
<path d="M1,15 L4.5,10.8 L5.5,12.6 C9,10.5 12.5,12.5 11.5,16.5 C11,17 10,17.5 9.5,17.5 C10,15 8.5,13.5 6.5,14.3 L7.5,15.8 Z" fill="#e01818"/>
</g>
<g transform="translate(419,171.5)">
<path d="M0.5,4.5 Q0.5,3 2,3 H4.5 L5.5,1 H11.5 L12.5,3 H14.5 Q16,3 16,4.5 V11.5 Q16,13 14.5,13 H2 Q0.5,13 0.5,11.5 Z" fill="#dedede" stroke="#cfcfcf" stroke-width="0.9"/>
<circle cx="8.3" cy="8" r="3.4" fill="#eeeeee" stroke="#cfcfcf" stroke-width="1.4"/>
<path d="M15,15 L11.5,10.8 L10.5,12.6 C7,10.5 3.5,12.5 4.5,16.5 C5,17 6,17.5 6.5,17.5 C6,15 7.5,13.5 9.5,14.3 L8.5,15.8 Z" fill="#d8d8d8" stroke="#c8c8c8" stroke-width="0.6"/>
</g>
<line x1="444.5" y1="174" x2="444.5" y2="187" stroke="#d8d8d8" stroke-width="1"/>
<g transform="translate(451.5,173.5)">
<path d="M0.5,4.5 Q0.5,3 2,3 H4.5 L5.5,1 H11.5 L12.5,3 H14.5 Q16,3 16,4.5 V11.5 Q16,13 14.5,13 H2 Q0.5,13 0.5,11.5 Z" fill="#c6c6c6" stroke="#8c8c8c" stroke-width="0.9"/>
<circle cx="8.3" cy="8" r="3.4" fill="#d8eefa" stroke="#8c8c8c" stroke-width="1.4"/>
<rect x="2" y="2.5" width="1" height="1" fill="#e03030"/>
</g>
<path d="M450.5,175.5 V172.5 H453.5" fill="none" stroke="#8a8a8a" stroke-width="1"/>
<path d="M467.5,175.5 V172.5 H464.5" fill="none" stroke="#8a8a8a" stroke-width="1"/>
<path d="M450.5,185.5 V188.5 H453.5" fill="none" stroke="#8a8a8a" stroke-width="1"/>
<path d="M467.5,185.5 V188.5 H464.5" fill="none" stroke="#8a8a8a" stroke-width="1"/>
<line x1="476.0" y1="174" x2="476.0" y2="187" stroke="#d8d8d8" stroke-width="1"/>
<text x="484.7" y="183.5" font-size="13" font-weight="bold" fill="#6f6c56" textLength="13.1" lengthAdjust="spacingAndGlyphs">3D</text>
<g transform="translate(509,171.5)">
<path d="M0.5,4.5 Q0.5,3 2,3 H4.5 L5.5,1 H11.5 L12.5,3 H14.5 Q16,3 16,4.5 V11.5 Q16,13 14.5,13 H2 Q0.5,13 0.5,11.5 Z" fill="#c6c6c6" stroke="#8c8c8c" stroke-width="0.9"/>
<circle cx="8.3" cy="8" r="3.4" fill="#d8eefa" stroke="#8c8c8c" stroke-width="1.4"/>
<rect x="2" y="2.5" width="1" height="1" fill="#e03030"/>
<path d="M9,9 L15.5,16 L14,17.5 L7.5,10.5 Z" fill="#e8b830" stroke="#7a6a30" stroke-width="0.7"/>
</g>
<line x1="534.0" y1="174" x2="534.0" y2="187" stroke="#d8d8d8" stroke-width="1"/>
<rect x="541.5" y="172.5" width="15" height="15" fill="none" stroke="#777" stroke-width="1"/>
<rect x="541.5" y="172.5" width="15" height="15" fill="none" stroke="#efefef" stroke-width="1.2" stroke-dasharray="2,2" stroke-dashoffset="2"/>
<path d="M547.5,176 h3 v3 h3 v3 h-3 v3 h-3 v-3 h-3 v-3 h3 Z" fill="#a6d48e" stroke="#6a9a50" stroke-width="0.8"/>
<rect x="567.5" y="172.5" width="15" height="15" fill="none" stroke="#777" stroke-width="1"/>
<rect x="567.5" y="172.5" width="15" height="15" fill="none" stroke="#efefef" stroke-width="1.2" stroke-dasharray="2,2" stroke-dashoffset="2"/>
<rect x="571" y="178.5" width="8" height="3" fill="#e02a2a"/>
<rect x="593.5" y="172.5" width="15" height="15" fill="none" stroke="#777" stroke-width="1"/>
<rect x="593.5" y="172.5" width="15" height="15" fill="none" stroke="#efefef" stroke-width="1.2" stroke-dasharray="2,2" stroke-dashoffset="2"/>
<path d="M597.5,174.5 h2 v2 h2 v2 h-2 v2 h-2 v-2 h-2 v-2 h2 Z" fill="#a6d48e" stroke="#6a9a50" stroke-width="0.6"/>
<rect x="596" y="182" width="6" height="2" fill="#e02a2a"/>
<path d="M602.5,182 L606.7,183.2 L603.7,186.2 Z" fill="#4a4a4a"/>
<line x1="604.5" y1="184" x2="608.1" y2="187.6" stroke="#4a4a4a" stroke-width="1.4"/>
<line x1="618.0" y1="174" x2="618.0" y2="187" stroke="#d8d8d8" stroke-width="1"/>
<rect x="625.5" y="172.5" width="15" height="15" fill="none" stroke="#777" stroke-width="1"/>
<rect x="625.5" y="172.5" width="15" height="15" fill="none" stroke="#efefef" stroke-width="1.2" stroke-dasharray="2,2" stroke-dashoffset="2"/>
<path d="M627.5,184 L632.5,175 L637.5,184 Z" fill="#a6d48e" stroke="#6a8a50" stroke-width="0.8"/>
<path d="M635,182 L639.2,183.2 L636.2,186.2 Z" fill="#4a4a4a"/>
<line x1="637" y1="184" x2="640.6" y2="187.6" stroke="#4a4a4a" stroke-width="1.4"/>
<rect x="651.5" y="172.5" width="15" height="15" fill="none" stroke="#777" stroke-width="1"/>
<rect x="651.5" y="172.5" width="15" height="15" fill="none" stroke="#efefef" stroke-width="1.2" stroke-dasharray="2,2" stroke-dashoffset="2"/>
<path d="M653.5,184.5 L658.5,175.5 L663.5,184.5 Z" fill="none" stroke="#c8c8c8" stroke-width="0.7"/>
<circle cx="658.5" cy="175.5" r="1.3" fill="#c83a2a"/>
<circle cx="653.8" cy="184" r="1.3" fill="#c83a2a"/>
<path d="M661,182 L665.2,183.2 L662.2,186.2 Z" fill="#4a4a4a"/>
<line x1="663" y1="184" x2="666.6" y2="187.6" stroke="#4a4a4a" stroke-width="1.4"/>
<path d="M677.5,180 V172.5 H693 V187.5 H688" fill="none" stroke="#888" stroke-width="0.8" stroke-dasharray="1.5,1.5"/>
<path d="M678.5,178 L684,176 V184.5 L678.5,183 Z" fill="#6cbc48" stroke="#5a7a40" stroke-width="0.7"/>
<path d="M684,176 L692.5,175 V183 L684,184.5 Z" fill="#a6d48e" stroke="#5a7a40" stroke-width="0.7"/>
<path d="M678.5,178 L684,176 L692.5,175 L687,173.8 L680,175.5 Z" fill="#c0e0b0" stroke="#5a7a40" stroke-width="0.7"/>
<path d="M686,182 L690.2,183.2 L687.2,186.2 Z" fill="#4a4a4a"/>
<line x1="688" y1="184" x2="691.6" y2="187.6" stroke="#4a4a4a" stroke-width="1.4"/>
<path d="M703.5,180 V173 H719 V187.5 H712" fill="none" stroke="#aaa" stroke-width="0.8" stroke-dasharray="1.5,1.5"/>
<circle cx="710" cy="173.5" r="0.9" fill="#e03030"/>
<circle cx="717.8" cy="175" r="0.9" fill="#e03030"/>
<circle cx="706" cy="178" r="0.9" fill="#e03030"/>
<circle cx="711" cy="179" r="0.9" fill="#e03030"/>
<circle cx="717.8" cy="180.5" r="0.9" fill="#e03030"/>
<circle cx="706" cy="182" r="0.9" fill="#e03030"/>
<circle cx="711" cy="183" r="0.9" fill="#e03030"/>
<path d="M711,182 L715.2,183.2 L712.2,186.2 Z" fill="#4a4a4a"/>
<line x1="713" y1="184" x2="716.6" y2="187.6" stroke="#4a4a4a" stroke-width="1.4"/>
<path d="M728.5,176 L738,173 L745,182 L738,188" fill="none" stroke="#888" stroke-width="0.8" stroke-dasharray="1.5,1.5"/>
<path d="M730,180 L737,175.5 V185 Z" fill="#a6d48e" stroke="#6a8a50" stroke-width="0.8"/>
<path d="M736,181 L740.2,182.2 L737.2,185.2 Z" fill="#4a4a4a"/>
<line x1="738" y1="183" x2="741.6" y2="186.6" stroke="#4a4a4a" stroke-width="1.4"/>
<path d="M754.5,176 L764,173 L771,182 L764,188" fill="none" stroke="#999" stroke-width="0.8" stroke-dasharray="1.5,1.5"/>
<circle cx="757.5" cy="176" r="1.2" fill="#c0301e"/>
<circle cx="761" cy="178" r="1.2" fill="#c0301e"/>
<circle cx="765" cy="176" r="1.2" fill="#c0301e"/>
<circle cx="758" cy="180.5" r="1.2" fill="#c0301e"/>
<circle cx="762" cy="182.5" r="1.2" fill="#c0301e"/>
<circle cx="766" cy="184" r="1.2" fill="#c0301e"/>
<rect x="781.5" y="172.5" width="15" height="15" fill="none" stroke="#777" stroke-width="1"/>
<rect x="781.5" y="172.5" width="15" height="15" fill="none" stroke="#efefef" stroke-width="1.2" stroke-dasharray="2,2" stroke-dashoffset="2"/>
<circle cx="785.5" cy="176.5" r="2.2" fill="#2a96d8"/>
<circle cx="785.5" cy="183" r="2.2" fill="#2a96d8"/>
<circle cx="791" cy="180.5" r="2.6" fill="#a6d48e" stroke="#6a8a50" stroke-width="0.7"/>
<path d="M791,182 L795.2,183.2 L792.2,186.2 Z" fill="#4a4a4a"/>
<line x1="793" y1="184" x2="796.6" y2="187.6" stroke="#4a4a4a" stroke-width="1.4"/>
<path d="M808,176 L812,172 H823 V184 L819,188 H808 Z" fill="#d6d6d6" stroke="#b0b0b0" stroke-width="0.8"/>
<path d="M808,176 H819 V188 M819,176 L823,172" fill="none" stroke="#b0b0b0" stroke-width="0.8"/>
<path d="M817,181 L821.2,182.2 L818.2,185.2 Z" fill="#a0a0a0"/>
<line x1="819" y1="183" x2="822.6" y2="186.6" stroke="#a0a0a0" stroke-width="1.4"/>
<circle cx="840.5" cy="179" r="2.2" fill="#dcdcdc" stroke="#c4c4c4" stroke-width="0.7"/>
<path d="M843,181 L847.2,182.2 L844.2,185.2 Z" fill="#b8b8b8"/>
<line x1="845" y1="183" x2="848.6" y2="186.6" stroke="#b8b8b8" stroke-width="1.4"/>
<path d="M862,187 L868.5,175 L875,187 Z" fill="#a6d48e" stroke="#6a8a50" stroke-width="0.8"/>
<path d="M868.5,182 L872.7,183.2 L869.7,186.2 Z" fill="#4a4a4a"/>
<line x1="870.5" y1="184" x2="874.1" y2="187.6" stroke="#4a4a4a" stroke-width="1.4"/>
<path d="M887.5,184.5 L893.5,174.5 L899.5,184.5 Z" fill="none" stroke="#c8c8c8" stroke-width="0.7"/>
<circle cx="893.5" cy="174.5" r="1.3" fill="#c83a2a"/>
<circle cx="888" cy="184.5" r="1.3" fill="#c83a2a"/>
<path d="M896,182 L900.2,183.2 L897.2,186.2 Z" fill="#4a4a4a"/>
<line x1="898" y1="184" x2="901.6" y2="187.6" stroke="#4a4a4a" stroke-width="1.4"/>
<path d="M911.5,187 L916.5,178.5 L921.5,187 Z" fill="#a6d48e" stroke="#6a8a50" stroke-width="0.8"/>
<text x="919" y="184" font-size="14" fill="#6c6a50" textLength="7.5" lengthAdjust="spacingAndGlyphs">?</text>
<circle cx="941.5" cy="184.5" r="2.4" fill="#e02a1e"/>
<text x="945" y="184" font-size="14" fill="#6c6a50" textLength="7.2" lengthAdjust="spacingAndGlyphs">?</text>
<path d="M968.5,173.5 h5 v4.8 h4.8 v5 h-4.8 v4.8 h-5 v-4.8 h-4.8 v-5 h4.8 Z" fill="#b0b0b0"/>
<rect x="990" y="177" width="14.2" height="5.8" fill="#b0b0b0" rx="1"/>
<circle cx="1023" cy="180" r="7" fill="none" stroke="#9c9c9c" stroke-width="2.2"/>
<line x1="1018.5" y1="175.5" x2="1027.5" y2="184.5" stroke="#9c9c9c" stroke-width="2.2"/></svg></body></html>
